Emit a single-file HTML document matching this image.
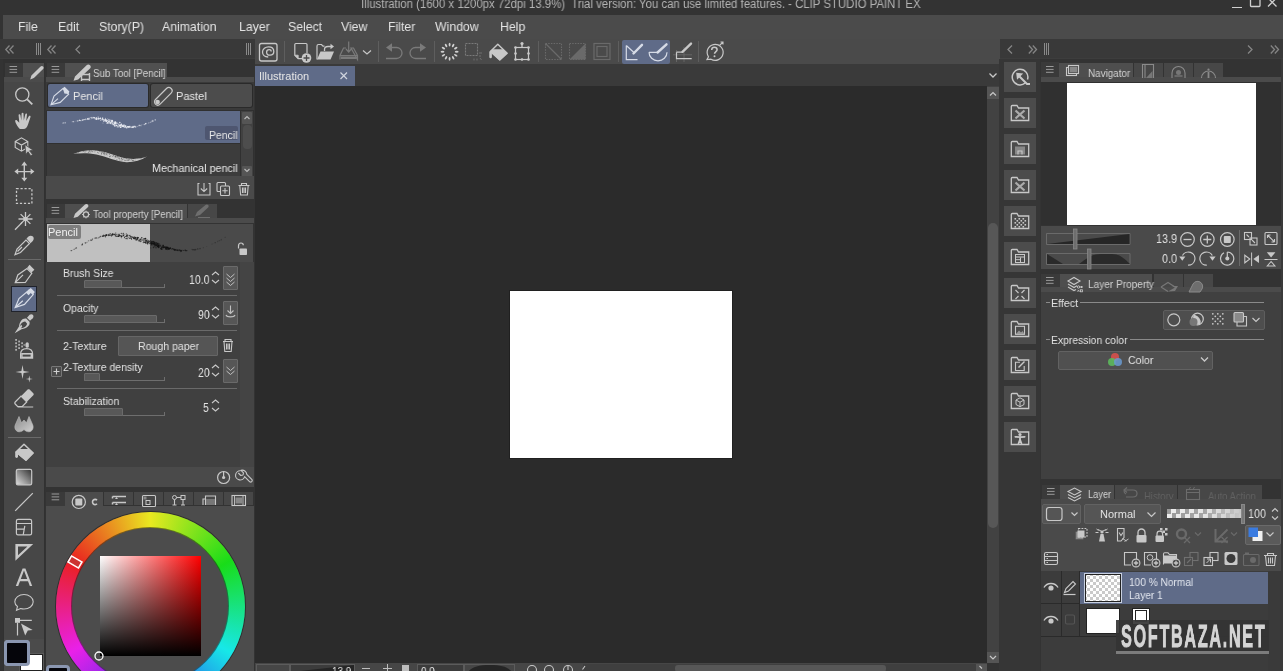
<!DOCTYPE html>
<html><head><meta charset="utf-8">
<style>
*{margin:0;padding:0;box-sizing:border-box}
html,body{width:1283px;height:671px;overflow:hidden;background:#333;font-family:"Liberation Sans",sans-serif;color:#ddd;position:relative}
.a{position:absolute}
.t{position:absolute;white-space:nowrap;line-height:1;will-change:transform}
svg{position:absolute;overflow:visible}
</style></head><body>
<div class="a" style="left:0px;top:0px;width:1283px;height:15px;background:#333333;"></div>
<div class="t" style="left:361px;top:-2px;font-size:12px;color:#b4b4b4;transform:scaleX(0.95);transform-origin:0 0">Illustration (1600 x 1200px 72dpi 13.9%)&nbsp; Trial version: You can use limited features. - CLIP STUDIO PAINT EX</div>
<div class="a" style="left:1232px;top:7px;width:10px;height:1px;background:#d0d0d0;"></div>
<svg style="left:1249px;top:-1px;stroke:#d0d0d0" width="12" height="9" viewBox="0 0 12 9" fill="none" stroke="#c4c4c4" stroke-width="1.3"><rect x="1.5" y="-1" width="9.5" height="8.5" rx="0.8"/></svg>
<svg style="left:1268px;top:-1px;stroke:#d0d0d0" width="12" height="10" viewBox="0 0 12 10" fill="none" stroke="#c4c4c4" stroke-width="1.3"><path d="M0 -1L8.5 7.5M8.5 -1L0 7.5"/></svg>
<div class="a" style="left:3px;top:15px;width:1280px;height:24px;background:#4b4b4b;"></div>
<div class="t" style="left:18px;top:20px;font-size:13px;color:#e4e4e4;transform:scaleX(0.945);transform-origin:0 0">File</div>
<div class="t" style="left:58px;top:20px;font-size:13px;color:#e4e4e4;transform:scaleX(0.945);transform-origin:0 0">Edit</div>
<div class="t" style="left:99px;top:20px;font-size:13px;color:#e4e4e4;transform:scaleX(0.945);transform-origin:0 0">Story(P)</div>
<div class="t" style="left:162px;top:20px;font-size:13px;color:#e4e4e4;transform:scaleX(0.945);transform-origin:0 0">Animation</div>
<div class="t" style="left:239px;top:20px;font-size:13px;color:#e4e4e4;transform:scaleX(0.945);transform-origin:0 0">Layer</div>
<div class="t" style="left:288px;top:20px;font-size:13px;color:#e4e4e4;transform:scaleX(0.945);transform-origin:0 0">Select</div>
<div class="t" style="left:341px;top:20px;font-size:13px;color:#e4e4e4;transform:scaleX(0.945);transform-origin:0 0">View</div>
<div class="t" style="left:388px;top:20px;font-size:13px;color:#e4e4e4;transform:scaleX(0.945);transform-origin:0 0">Filter</div>
<div class="t" style="left:435px;top:20px;font-size:13px;color:#e4e4e4;transform:scaleX(0.945);transform-origin:0 0">Window</div>
<div class="t" style="left:500px;top:20px;font-size:13px;color:#e4e4e4;transform:scaleX(0.945);transform-origin:0 0">Help</div>
<div class="a" style="left:0px;top:39px;width:1283px;height:20px;background:#393939;"></div>
<div class="a" style="left:0px;top:58px;width:1283px;height:1px;background:#3d3d3d;"></div>
<svg style="left:5px;top:45px;stroke:#858585" width="10" height="9" viewBox="0 0 10 9" fill="none" stroke="#c4c4c4" stroke-width="1.3"><path d="M4.5 0.5L0.8 4.5L4.5 8.5M8.5 0.5L4.8 4.5L8.5 8.5"/></svg>
<div class="a" style="left:36px;top:43px;width:1px;height:12px;background:#8a8a8a;"></div>
<div class="a" style="left:38px;top:43px;width:1px;height:12px;background:#8a8a8a;"></div>
<div class="a" style="left:40px;top:43px;width:1px;height:12px;background:#8a8a8a;"></div>
<svg style="left:47px;top:45px;stroke:#858585" width="10" height="9" viewBox="0 0 10 9" fill="none" stroke="#c4c4c4" stroke-width="1.3"><path d="M4.5 0.5L0.8 4.5L4.5 8.5M8.5 0.5L4.8 4.5L8.5 8.5"/></svg>
<svg style="left:75px;top:45px;stroke:#858585" width="6" height="9" viewBox="0 0 6 9" fill="none" stroke="#c4c4c4" stroke-width="1.3"><path d="M5 0.5L1 4.5L5 8.5"/></svg>
<div class="a" style="left:246px;top:43px;width:1px;height:12px;background:#8a8a8a;"></div>
<div class="a" style="left:248px;top:43px;width:1px;height:12px;background:#8a8a8a;"></div>
<div class="a" style="left:250px;top:43px;width:1px;height:12px;background:#8a8a8a;"></div>
<svg style="left:1007px;top:45px;stroke:#858585" width="6" height="9" viewBox="0 0 6 9" fill="none" stroke="#c4c4c4" stroke-width="1.3"><path d="M5 0.5L1 4.5L5 8.5"/></svg>
<svg style="left:1028px;top:45px;stroke:#858585" width="10" height="9" viewBox="0 0 10 9" fill="none" stroke="#c4c4c4" stroke-width="1.3"><path d="M0.8 0.5L4.5 4.5L0.8 8.5M4.8 0.5L8.5 4.5L4.8 8.5"/></svg>
<div class="a" style="left:1044px;top:43px;width:1px;height:12px;background:#8a8a8a;"></div>
<div class="a" style="left:1046px;top:43px;width:1px;height:12px;background:#8a8a8a;"></div>
<div class="a" style="left:1048px;top:43px;width:1px;height:12px;background:#8a8a8a;"></div>
<svg style="left:1247px;top:45px;stroke:#858585" width="6" height="9" viewBox="0 0 6 9" fill="none" stroke="#c4c4c4" stroke-width="1.3"><path d="M1 0.5L5 4.5L1 8.5"/></svg>
<svg style="left:1270px;top:45px;stroke:#858585" width="10" height="9" viewBox="0 0 10 9" fill="none" stroke="#c4c4c4" stroke-width="1.3"><path d="M0.8 0.5L4.5 4.5L0.8 8.5M4.8 0.5L8.5 4.5L4.8 8.5"/></svg>
<div class="a" style="left:0px;top:59px;width:3px;height:612px;background:#333333;"></div>
<div class="a" style="left:3px;top:59px;width:42px;height:612px;background:#313131;"></div>
<div class="a" style="left:5px;top:63px;width:18px;height:14px;background:#3a3a3a;"></div>
<div class="a" style="left:23px;top:63px;width:21px;height:14px;background:#4f4f4f;"></div>
<div class="a" style="left:4px;top:77px;width:40px;height:5px;background:#4b4b4b;"></div>
<div class="a" style="left:4px;top:82px;width:40px;height:557px;background:#474747;"></div>
<div class="a" style="left:4px;top:639px;width:40px;height:32px;background:#4b4b4b;"></div>
<div class="a" style="left:12px;top:287px;width:24px;height:24px;background:#5f6b88;box-shadow:0 0 0 1px #20232c"></div>
<div class="a" style="left:45px;top:59px;width:210px;height:142px;background:#333333;"></div>
<div class="a" style="left:47px;top:63px;width:18px;height:14px;background:#3a3a3a;"></div>
<div class="a" style="left:65px;top:63px;width:102px;height:15px;background:#505050;"></div>
<div class="a" style="left:46px;top:77px;width:208px;height:5px;background:#4b4b4b;"></div>
<div class="t" style="left:93px;top:68px;font-size:10.5px;color:#d2d2d2;transform:scaleX(0.93);transform-origin:0 0">Sub Tool [Pencil]</div>
<div class="a" style="left:46px;top:82px;width:208px;height:28px;background:#3a3a3a;"></div>
<div class="a" style="left:48px;top:84px;width:100px;height:23px;background:#5f6b88;border-radius:2px;box-shadow:0 0 0 1px #2a2a2a"></div>
<div class="a" style="left:151px;top:84px;width:101px;height:23px;background:#4c4c4c;border-radius:2px;box-shadow:0 0 0 1px #2a2a2a"></div>
<div class="t" style="left:73px;top:91px;font-size:11.5px;color:#e8e8e8;transform:scaleX(0.95);transform-origin:0 0">Pencil</div>
<div class="t" style="left:175.5px;top:91px;font-size:11.5px;color:#e8e8e8;transform:scaleX(0.96);transform-origin:0 0">Pastel</div>
<div class="a" style="left:46px;top:110px;width:208px;height:66px;background:#303030;"></div>
<div class="a" style="left:47px;top:111px;width:193px;height:32px;background:#5f6b88;"></div>
<div class="a" style="left:47px;top:144px;width:193px;height:32px;background:#3c3c3c;"></div>
<div class="a" style="left:241px;top:111px;width:12px;height:67px;background:#414141;"></div>
<div class="a" style="left:242px;top:112px;width:10px;height:12px;background:#555555;border-radius:1px"></div>
<div class="a" style="left:243px;top:125px;width:9px;height:24px;background:#4d4d4d;border-radius:4px"></div>
<div class="a" style="left:242px;top:166px;width:10px;height:12px;background:#555555;border-radius:1px"></div>
<div class="a" style="left:205px;top:126px;width:33px;height:14px;background:#4e5670;border-radius:2px"></div>
<div class="t" style="left:209px;top:130px;font-size:11px;color:#e8e8e8;transform:scaleX(0.95);transform-origin:0 0">Pencil</div>
<div class="t" style="left:152px;top:163px;font-size:11px;color:#e8e8e8;transform:scaleX(0.98);transform-origin:0 0">Mechanical pencil</div>
<div class="a" style="left:46px;top:176px;width:208px;height:23px;background:#4a4a4a;"></div>
<div class="a" style="left:45px;top:201px;width:210px;height:3px;background:#333333;"></div>
<div class="a" style="left:45px;top:204px;width:210px;height:20px;background:#333333;"></div>
<div class="a" style="left:47px;top:204px;width:18px;height:14px;background:#3a3a3a;"></div>
<div class="a" style="left:65px;top:204px;width:122px;height:14px;background:#4e4e4e;"></div>
<div class="a" style="left:188px;top:204px;width:29px;height:14px;background:#474747;"></div>
<div class="a" style="left:46px;top:218px;width:208px;height:5px;background:#4b4b4b;"></div>
<div class="t" style="left:93px;top:209px;font-size:10.5px;color:#d2d2d2;transform:scaleX(0.915);transform-origin:0 0">Tool property [Pencil]</div>
<div class="a" style="left:47px;top:224px;width:103px;height:38px;background:#c0c0c0;"></div>
<div class="a" style="left:150px;top:224px;width:103px;height:38px;background:#4a4a4a;"></div>
<div class="a" style="left:48px;top:225px;width:33px;height:14px;background:#7e7e7e;border-radius:2px"></div>
<div class="t" style="left:48px;top:227px;font-size:11px;color:#f0f0f0;">Pencil</div>
<div class="a" style="left:46px;top:262px;width:208px;height:205px;background:#404040;"></div>
<div class="a" style="left:240px;top:262px;width:14px;height:205px;background:#444444;"></div>
<div class="a" style="left:46px;top:467px;width:208px;height:20px;background:#4a4a4a;"></div>
<div class="a" style="left:45px;top:487px;width:210px;height:3px;background:#333333;"></div>
<div class="t" style="left:63px;top:268px;font-size:11px;color:#e2e2e2;transform:scaleX(0.95);transform-origin:0 0">Brush Size</div>
<div class="a" style="left:84px;top:287px;width:81px;height:1px;background:#6e6e6e;"></div>
<div class="a" style="left:164px;top:284px;width:1px;height:4px;background:#6e6e6e;"></div>
<div class="a" style="left:84px;top:280px;width:38px;height:8px;background:#585858;border:1px solid #6a6a6a;border-radius:1px"></div>
<div class="t" style="left:189px;top:273.5px;font-size:12.5px;color:#e2e2e2;transform:scaleX(0.84);transform-origin:0 0">10.0</div>
<div class="a" style="left:223px;top:266px;width:15px;height:24px;background:#565656;border:1px solid #6a6a6a;border-radius:1px"></div>
<div class="a" style="left:57px;top:295px;width:180px;height:1px;background:#6a6a6a;"></div>
<div class="t" style="left:63px;top:303px;font-size:11px;color:#e2e2e2;transform:scaleX(0.95);transform-origin:0 0">Opacity</div>
<div class="a" style="left:84px;top:322px;width:81px;height:1px;background:#6e6e6e;"></div>
<div class="a" style="left:164px;top:319px;width:1px;height:4px;background:#6e6e6e;"></div>
<div class="a" style="left:84px;top:315px;width:73px;height:8px;background:#585858;border:1px solid #6a6a6a;border-radius:1px"></div>
<div class="t" style="left:197.5px;top:308.5px;font-size:12.5px;color:#e2e2e2;transform:scaleX(0.84);transform-origin:0 0">90</div>
<div class="a" style="left:223px;top:301px;width:15px;height:24px;background:#565656;border:1px solid #6a6a6a;border-radius:1px"></div>
<div class="a" style="left:57px;top:330px;width:180px;height:1px;background:#6a6a6a;"></div>
<div class="t" style="left:63px;top:341px;font-size:11px;color:#e2e2e2;transform:scaleX(0.95);transform-origin:0 0">2-Texture</div>
<div class="a" style="left:118px;top:336px;width:100px;height:20px;background:#555555;border:1px solid #666666;border-radius:1px"></div>
<div class="t" style="left:138px;top:341px;font-size:11px;color:#e2e2e2;transform:scaleX(0.96);transform-origin:0 0">Rough paper</div>
<div class="a" style="left:51px;top:366px;width:11px;height:11px;background:#4a4a4a;border:1px solid #777;border-radius:1px"></div>
<div class="t" style="left:63px;top:361.5px;font-size:11px;color:#e2e2e2;transform:scaleX(0.95);transform-origin:0 0">2-Texture density</div>
<div class="a" style="left:84px;top:380px;width:81px;height:1px;background:#6e6e6e;"></div>
<div class="a" style="left:164px;top:377px;width:1px;height:4px;background:#6e6e6e;"></div>
<div class="a" style="left:84px;top:373px;width:16px;height:8px;background:#585858;border:1px solid #6a6a6a;border-radius:1px"></div>
<div class="t" style="left:197.5px;top:366.5px;font-size:12.5px;color:#e2e2e2;transform:scaleX(0.84);transform-origin:0 0">20</div>
<div class="a" style="left:223px;top:359px;width:15px;height:24px;background:#565656;border:1px solid #6a6a6a;border-radius:1px"></div>
<div class="a" style="left:57px;top:388px;width:180px;height:1px;background:#6a6a6a;"></div>
<div class="t" style="left:63px;top:396px;font-size:11px;color:#e2e2e2;transform:scaleX(0.95);transform-origin:0 0">Stabilization</div>
<div class="a" style="left:84px;top:415px;width:81px;height:1px;background:#6e6e6e;"></div>
<div class="a" style="left:164px;top:412px;width:1px;height:4px;background:#6e6e6e;"></div>
<div class="a" style="left:84px;top:408px;width:39px;height:8px;background:#585858;border:1px solid #6a6a6a;border-radius:1px"></div>
<div class="t" style="left:203px;top:401.5px;font-size:12.5px;color:#e2e2e2;transform:scaleX(0.84);transform-origin:0 0">5</div>
<div class="a" style="left:45px;top:490px;width:210px;height:181px;background:#333333;"></div>
<div class="a" style="left:46px;top:492px;width:19px;height:14px;background:#3a3a3a;"></div>
<div class="a" style="left:65px;top:492px;width:38px;height:14px;background:#4c4c4c;"></div>
<div class="a" style="left:104px;top:492px;width:29px;height:13px;background:#474747;"></div>
<div class="a" style="left:134px;top:492px;width:29px;height:13px;background:#474747;"></div>
<div class="a" style="left:164px;top:492px;width:29px;height:13px;background:#474747;"></div>
<div class="a" style="left:194px;top:492px;width:29px;height:13px;background:#474747;"></div>
<div class="a" style="left:224px;top:492px;width:29px;height:13px;background:#474747;"></div>
<div class="a" style="left:46px;top:506px;width:208px;height:165px;background:#4c4c4c;"></div>
<div class="a" style="left:55.5px;top:511.5px;width:189px;height:189px;border-radius:50%;background:conic-gradient(from 0deg,hsl(60,82%,52%),hsl(120,80%,48%) 60deg,hsl(180,82%,50%) 120deg,hsl(240,80%,55%) 180deg,hsl(300,82%,52%) 240deg,hsl(360,82%,52%) 300deg,hsl(420,82%,52%) 360deg);box-shadow:0 0 0 1px rgba(20,20,20,0.5)"></div>
<div class="a" style="left:72px;top:528px;width:156px;height:156px;border-radius:50%;background:#4c4c4c;box-shadow:0 0 0 1px rgba(20,20,20,0.5)"></div>
<div class="a" style="left:100px;top:556px;width:101px;height:100px;background:linear-gradient(to bottom,rgba(0,0,0,0),#000),linear-gradient(to right,#fff,#f00)"></div>
<div class="a" style="left:4px;top:640px;width:26px;height:26px;background:#05050a;border:3px solid #8a96b0;border-radius:4px"></div>
<div class="a" style="left:20px;top:654px;width:23px;height:17px;background:#ffffff;border:1px solid #222;box-shadow:0 0 0 1px #5a5a5a"></div>
<div class="a" style="left:4px;top:640px;width:26px;height:26px;background:#05050a;border:3px solid #8a96b0;border-radius:4px"></div>
<div class="a" style="left:46px;top:665px;width:24px;height:10px;background:#05050a;border:3px solid #8a96b0;border-radius:4px"></div>
<div class="a" style="left:255px;top:39px;width:745px;height:25px;background:#4a4a4a;"></div>
<div class="a" style="left:284px;top:41px;width:1px;height:21px;background:#5e5e5e;"></div>
<div class="a" style="left:378px;top:41px;width:1px;height:21px;background:#5e5e5e;"></div>
<div class="a" style="left:434px;top:41px;width:1px;height:21px;background:#5e5e5e;"></div>
<div class="a" style="left:538px;top:41px;width:1px;height:21px;background:#5e5e5e;"></div>
<div class="a" style="left:618px;top:41px;width:1px;height:21px;background:#5e5e5e;"></div>
<div class="a" style="left:698px;top:41px;width:1px;height:21px;background:#5e5e5e;"></div>
<div class="a" style="left:255px;top:64px;width:744px;height:22px;background:#3a3a3a;"></div>
<div class="a" style="left:622px;top:40px;width:48px;height:24px;background:#5f6b88;border-radius:2px"></div>
<div class="a" style="left:255px;top:66px;width:100px;height:20px;background:#5f6b88;"></div>
<div class="t" style="left:259px;top:71px;font-size:11px;color:#e6e6e6;">Illustration</div>
<div class="a" style="left:255px;top:86px;width:732px;height:577px;background:#2b2b2b;"></div>
<div class="a" style="left:510px;top:291px;width:222px;height:167px;background:#ffffff;box-shadow:0 0 0 1px #202020"></div>
<div class="a" style="left:987px;top:86px;width:12px;height:577px;background:#424242;"></div>
<div class="a" style="left:987px;top:87px;width:12px;height:12px;background:#555555;"></div>
<div class="a" style="left:988px;top:223px;width:10px;height:305px;background:#575757;border-radius:5px"></div>
<div class="a" style="left:987px;top:652px;width:12px;height:11px;background:#555555;"></div>
<div class="a" style="left:255px;top:663px;width:732px;height:8px;background:#464646;"></div>
<div class="a" style="left:256px;top:664px;width:34px;height:8px;background:#464646;border:1px solid #5c5c5c"></div>
<div class="a" style="left:290px;top:664px;width:65px;height:8px;background:#3c3c3c;border:1px solid #5c5c5c"></div>
<svg style="left:290px;top:664px" width="65" height="8"><path d="M1 8L64 1V8Z" fill="#252525"/></svg>
<div class="t" style="left:332px;top:666px;font-size:11.5px;color:#e8e8e8;transform:scaleX(0.86);transform-origin:0 0">13.9</div>
<div class="a" style="left:362px;top:668px;width:8px;height:1.3px;background:#bdbdbd;"></div>
<div class="a" style="left:383px;top:668px;width:9px;height:1.3px;background:#bdbdbd;"></div>
<div class="a" style="left:386.8px;top:664px;width:1.3px;height:8px;background:#bdbdbd;"></div>
<div class="a" style="left:402px;top:665px;width:7px;height:7px;background:#bdbdbd;"></div>
<div class="a" style="left:417px;top:664px;width:47px;height:8px;background:#3c3c3c;border:1px solid #5c5c5c"></div>
<div class="t" style="left:421px;top:666px;font-size:11.5px;color:#e8e8e8;transform:scaleX(0.86);transform-origin:0 0">0.0</div>
<div class="a" style="left:464px;top:664px;width:51px;height:8px;background:#464646;border:1px solid #5c5c5c"></div>
<svg style="left:464px;top:664px" width="51" height="8"><path d="M4 8C8 3 14 1 26 1C38 1 44 3 48 8Z" fill="#252525"/></svg>
<div class="a" style="left:583px;top:664px;width:404px;height:8px;background:#3f3f3f;"></div>
<div class="a" style="left:675px;top:665px;width:211px;height:7px;background:#575757;border-radius:3px"></div>
<div class="a" style="left:976px;top:664px;width:11px;height:8px;background:#555555;"></div>
<div class="a" style="left:999px;top:59px;width:41px;height:612px;background:#363636;"></div>
<div class="a" style="left:1004px;top:62px;width:32px;height:30px;background:#4c4c4c;"></div>
<div class="a" style="left:1004px;top:98px;width:32px;height:30px;background:#4c4c4c;"></div>
<div class="a" style="left:1004px;top:134px;width:32px;height:30px;background:#4c4c4c;"></div>
<div class="a" style="left:1004px;top:170px;width:32px;height:30px;background:#4c4c4c;"></div>
<div class="a" style="left:1004px;top:206px;width:32px;height:30px;background:#4c4c4c;"></div>
<div class="a" style="left:1004px;top:242px;width:32px;height:30px;background:#4c4c4c;"></div>
<div class="a" style="left:1004px;top:278px;width:32px;height:30px;background:#4c4c4c;"></div>
<div class="a" style="left:1004px;top:314px;width:32px;height:30px;background:#4c4c4c;"></div>
<div class="a" style="left:1004px;top:350px;width:32px;height:30px;background:#4c4c4c;"></div>
<div class="a" style="left:1004px;top:386px;width:32px;height:30px;background:#4c4c4c;"></div>
<div class="a" style="left:1004px;top:422px;width:32px;height:30px;background:#4c4c4c;"></div>
<div class="a" style="left:1040px;top:59px;width:243px;height:612px;background:#333333;"></div>
<div class="a" style="left:1281px;top:59px;width:2px;height:612px;background:#3a3a3a;"></div>
<div class="a" style="left:1041px;top:62px;width:18px;height:15px;background:#3a3a3a;"></div>
<div class="a" style="left:1059px;top:63px;width:74px;height:14px;background:#4e4e4e;"></div>
<div class="a" style="left:1134px;top:63px;width:29px;height:14px;background:#474747;"></div>
<div class="a" style="left:1164px;top:63px;width:29px;height:14px;background:#474747;"></div>
<div class="a" style="left:1194px;top:63px;width:29px;height:14px;background:#474747;"></div>
<div class="a" style="left:1041px;top:77px;width:240px;height:5px;background:#4b4b4b;"></div>
<div class="a" style="left:1041px;top:82px;width:240px;height:143px;background:#303030;"></div>
<div class="a" style="left:1067px;top:83px;width:189px;height:142px;background:#ffffff;"></div>
<div class="a" style="left:1041px;top:226px;width:240px;height:43px;background:#4a4a4a;"></div>
<div class="t" style="left:1088px;top:68px;font-size:10.5px;color:#d2d2d2;transform:scaleX(0.94);transform-origin:0 0">Navigator</div>
<div class="t" style="left:1156px;top:233px;font-size:12.5px;color:#e0e0e0;transform:scaleX(0.86);transform-origin:0 0">13.9</div>
<div class="t" style="left:1161.5px;top:252.5px;font-size:12.5px;color:#e0e0e0;transform:scaleX(0.86);transform-origin:0 0">0.0</div>
<div class="a" style="left:1239px;top:230px;width:1px;height:36px;background:#6a6a6a;"></div>
<div class="a" style="left:1041px;top:274px;width:19px;height:14px;background:#3a3a3a;"></div>
<div class="a" style="left:1060px;top:274px;width:92px;height:14px;background:#4e4e4e;"></div>
<div class="a" style="left:1154px;top:274px;width:29px;height:14px;background:#474747;"></div>
<div class="a" style="left:1184px;top:274px;width:29px;height:14px;background:#474747;"></div>
<div class="a" style="left:1041px;top:287px;width:240px;height:5px;background:#4b4b4b;"></div>
<div class="a" style="left:1041px;top:292px;width:240px;height:187px;background:#404040;"></div>
<div class="t" style="left:1088px;top:279px;font-size:10.5px;color:#d2d2d2;transform:scaleX(0.96);transform-origin:0 0">Layer Property</div>
<div class="t" style="left:1051px;top:297.5px;font-size:11.5px;color:#e2e2e2;transform:scaleX(0.93);transform-origin:0 0">Effect</div>
<div class="t" style="left:1051px;top:335px;font-size:11.5px;color:#e2e2e2;transform:scaleX(0.9);transform-origin:0 0">Expression color</div>
<div class="a" style="left:1163px;top:310px;width:102px;height:20px;background:#4e4e4e;border:1px solid #5e5e5e;border-radius:2px"></div>
<div class="a" style="left:1058px;top:351px;width:155px;height:19px;background:#505050;border:1px solid #626262;border-radius:2px"></div>
<div class="t" style="left:1127.5px;top:354.5px;font-size:11.5px;color:#e2e2e2;transform:scaleX(0.92);transform-origin:0 0">Color</div>
<div class="a" style="left:1111px;top:353px;width:8px;height:8px;border-radius:50%;background:#c9504c"></div>
<div class="a" style="left:1108px;top:357.5px;width:8px;height:8px;border-radius:50%;background:#5cb85c;opacity:0.9"></div>
<div class="a" style="left:1114px;top:357.5px;width:8px;height:8px;border-radius:50%;background:#6a9ad0;opacity:0.85"></div>
<div class="a" style="left:1042px;top:485px;width:18px;height:14px;background:#3a3a3a;"></div>
<div class="a" style="left:1060px;top:485px;width:54px;height:14px;background:#4e4e4e;"></div>
<div class="a" style="left:1115px;top:485px;width:62px;height:14px;background:#474747;"></div>
<div class="a" style="left:1178px;top:485px;width:84px;height:14px;background:#474747;"></div>
<div class="a" style="left:1041px;top:499px;width:240px;height:72px;background:#4a4a4a;"></div>
<div class="t" style="left:1088px;top:489px;font-size:10.5px;color:#d2d2d2;transform:scaleX(0.88);transform-origin:0 0">Layer</div>
<div class="a" style="left:1115px;top:485px;width:147px;height:13.5px;overflow:hidden"><div class="t" style="left:29px;top:6px;font-size:10.5px;color:#626262;transform:scaleX(0.9);transform-origin:0 0">History</div><div class="t" style="left:92.5px;top:6px;font-size:10.5px;color:#626262;transform:scaleX(0.9);transform-origin:0 0">Auto Action</div></div>
<div class="a" style="left:1042px;top:504px;width:39px;height:20px;background:#555555;border:1px solid #626262;border-radius:2px"></div>
<div class="a" style="left:1084px;top:504px;width:77px;height:20px;background:#555555;border:1px solid #626262;border-radius:2px"></div>
<div class="t" style="left:1100px;top:509px;font-size:11px;color:#e2e2e2;">Normal</div>
<div class="a" style="left:1167px;top:509px;width:75px;height:9px;background:linear-gradient(to right,rgba(200,200,200,0) 0%,rgba(200,200,200,0.25) 50%,rgba(200,200,200,1) 100%),conic-gradient(#eeeeee 25%,#9a9a9a 0 50%,#eeeeee 0 75%,#9a9a9a 0);background-size:100% 100%,9px 9px;background-position:0 0,0 0"></div>
<div class="a" style="left:1241px;top:504px;width:4px;height:20px;background:#777777;border:1px solid #888"></div>
<div class="t" style="left:1248px;top:507.5px;font-size:12.5px;color:#e2e2e2;transform:scaleX(0.86);transform-origin:0 0">100</div>
<div class="a" style="left:1245px;top:525px;width:36px;height:20px;background:#5a5a5a;border:1px solid #6a6a6a;border-radius:2px"></div>
<div class="a" style="left:1041px;top:571px;width:240px;height:100px;background:#3c3c3c;"></div>
<div class="a" style="left:1061px;top:571px;width:1px;height:66px;background:#2a2a2a;"></div>
<div class="a" style="left:1079px;top:571px;width:1px;height:66px;background:#2a2a2a;"></div>
<div class="a" style="left:1041px;top:603px;width:227px;height:1px;background:#2a2a2a;"></div>
<div class="a" style="left:1041px;top:636px;width:227px;height:1px;background:#2a2a2a;"></div>
<div class="a" style="left:1268px;top:571px;width:13px;height:100px;background:#3a3a3a;"></div>
<div class="a" style="left:1080px;top:572px;width:188px;height:32px;background:#5f6b88;"></div>
<div class="a" style="left:1084px;top:573px;width:38px;height:30px;border:1px solid #c8d0e0;box-shadow:inset 0 0 0 1px #222;background:conic-gradient(#ffffff 25%,#cacaca 0 50%,#ffffff 0 75%,#cacaca 0);background-size:6px 6px;background-position:2px 2px"></div>
<div class="t" style="left:1129px;top:577px;font-size:11px;color:#e2e6ee;transform:scaleX(0.92);transform-origin:0 0">100 % Normal</div>
<div class="t" style="left:1129px;top:589.5px;font-size:11px;color:#e2e6ee;transform:scaleX(0.92);transform-origin:0 0">Layer 1</div>
<div class="a" style="left:1086px;top:608px;width:34px;height:26px;background:#ffffff;border:1px solid #222"></div>
<div class="a" style="left:1132px;top:608px;width:18px;height:17px;background:#ffffff;border:1px solid #222"></div>
<div class="a" style="left:1046px;top:302px;width:4px;height:1px;background:#8a8a8a;"></div>
<div class="a" style="left:1080px;top:302px;width:184px;height:1px;background:#8a8a8a;"></div>
<div class="a" style="left:1046px;top:339px;width:4px;height:1px;background:#8a8a8a;"></div>
<div class="a" style="left:1130px;top:339px;width:134px;height:1px;background:#8a8a8a;"></div>
<div class="a" style="left:8px;top:259px;width:33px;height:1px;background:#6a6a6a;"></div>
<div class="a" style="left:8px;top:437px;width:33px;height:1px;background:#6a6a6a;"></div>
<div class="a" style="left:1116px;top:620px;width:153px;height:34px;background:rgba(52,52,52,0.92);z-index:6"></div>
<div class="a" style="left:1116px;top:651px;width:153px;height:3px;background:#7c7c7c;z-index:6"></div>
<div class="t" id="wm" style="left:1121px;top:621px;font-size:30.5px;font-weight:bold;color:#d4d4d4;z-index:7;transform:scaleX(0.535);transform-origin:0 0;letter-spacing:3px;-webkit-text-stroke:0.9px #d4d4d4">SOFTBAZA.NET</div>
<svg style="left:0;top:0;z-index:5" width="1283" height="671" viewBox="0 0 1283 671" fill="none" stroke="#c8c8c8" stroke-width="1.3"><path d="M212 275L215.5 272L219 275M212 280L215.5 283L219 280" stroke="#c8c8c8" stroke-width="1.1"/><path d="M212 310L215.5 307L219 310M212 315L215.5 318L219 315" stroke="#c8c8c8" stroke-width="1.1"/><path d="M212 368L215.5 365L219 368M212 373L215.5 376L219 373" stroke="#c8c8c8" stroke-width="1.1"/><path d="M212 403L215.5 400L219 403M212 408L215.5 411L219 408" stroke="#c8c8c8" stroke-width="1.1"/><path d="M53.5 371.5H59.5M56.5 368.5V374.5" stroke="#d0d0d0" stroke-width="1.1"/><path d="M226.5 274L230.5 277.5L234.5 274M226.5 278L230.5 281.5L234.5 278M226.5 282L230.5 285.5L234.5 282" stroke="#c0c0c0" stroke-width="1"/><path d="M230.5 305.5V313M227.5 310.5L230.5 313.5L233.5 310.5M226 315C227 317.5 234 317.5 235 315" stroke="#c0c0c0" stroke-width="1.1"/><path d="M226.5 367L230.5 370.5L234.5 367M226.5 371L230.5 374.5L234.5 371" stroke="#c0c0c0" stroke-width="1"/><path d="M223 341.5H233M225 341.5V339.5H231V341.5M224 341.5L224.8 351.5H231.2L232 341.5M226.5 343.5V349.5M228 343.5V349.5M229.5 343.5V349.5" stroke-width="1.1"/><circle cx="223.6" cy="477.5" r="6" stroke-width="1.2"/><path d="M223.6 471.5V477.5" stroke-width="1.2"/><circle cx="223.6" cy="477.5" r="1.6" fill="#c8c8c8" stroke="none"/><path d="M240.5 470.8A4.6 4.6 0 1 0 244.6 476.6L249.8 481.8A1.6 1.6 0 0 0 252 479.6L246.8 474.4A4.6 4.6 0 0 0 241 470.3L243.5 472.8L243 475L240.8 475.5L238.3 473" stroke-width="1.1" stroke-linejoin="round"/><rect x="259.5" y="43.5" width="17.5" height="17.5" rx="2" stroke-width="1.3"/><path d="M268.2 57C264.5 57 262.5 54.6 262.5 52C262.5 48.8 265.5 46.8 268.5 46.8C271.5 46.8 273.8 48.6 273.8 51.5C273.8 53.8 272 55.2 270 55.2C268 55.2 266.6 54 266.6 52.2C266.6 50.6 267.8 49.6 269.2 49.6C270.4 49.6 271.2 50.4 271.2 51.4" stroke-width="1.3"/><path d="M302.5 58.6H298.2L294.8 55.2V44.5C294.8 43.9 295.2 43.5 295.8 43.5H306C306.6 43.5 307 43.9 307 44.5V53" stroke-width="1.2"/><path d="M295 55.2H298.2V58.4Z" fill="#c8c8c8" stroke="#c8c8c8" stroke-width="0.8"/><circle cx="306.5" cy="58" r="4.8" fill="#c8c8c8" stroke="none"/><path d="M306.5 55V61M303.5 58H309.5" stroke="#4a4a4a" stroke-width="1.3"/><path d="M317 59.5V46C317 45 317.6 44.5 318.5 44.5H321.5L323 46.2H324.5" stroke-width="1.2"/><path d="M317 59.5L320.5 51.5H334L330.5 59.5Z" fill="#c8c8c8" stroke="none"/><path d="M324.5 51V49.5C324.5 47.5 326 46.5 328 46.5H331.5" stroke-width="1.3"/><path d="M330.5 43.8L334 46.5L330.5 49.2Z" fill="#c8c8c8" stroke="none"/><path d="M340 59.5V55.5L343.5 48H346M351 48H353.5L357.5 55.5V59.5Z M340 55.5H357.5" stroke="#7a7a7a" stroke-width="1.2"/><path d="M348.7 41.5V51.5M346 49L348.7 52L351.4 49" stroke="#7a7a7a" stroke-width="1.2"/><rect x="341" y="56.5" width="15.5" height="2.5" fill="#7a7a7a" stroke="none"/><path d="M363 50.5L367 54L371 50.5" stroke-width="1.2"/><path d="M390.5 47.5H396.5A5.5 5.5 0 0 1 396.5 58.5H386" stroke="#7a7a7a" stroke-width="1.3"/><path d="M386 47.5L392 43.2V51.8Z" fill="#7a7a7a" stroke="none"/><path d="M421.5 47.5H415.5A5.5 5.5 0 0 0 415.5 58.5H426" stroke="#7a7a7a" stroke-width="1.3"/><path d="M426 47.5L420 43.2V51.8Z" fill="#7a7a7a" stroke="none"/><g fill="#d0d0d0" stroke="none"><ellipse cx="449.60" cy="44.60" rx="0.95" ry="1.9" transform="rotate(0 449.60 44.60)"/><ellipse cx="453.15" cy="45.55" rx="0.95" ry="1.9" transform="rotate(30 453.15 45.55)"/><ellipse cx="455.75" cy="48.15" rx="0.95" ry="1.9" transform="rotate(60 455.75 48.15)"/><ellipse cx="456.70" cy="51.70" rx="0.95" ry="1.9" transform="rotate(90 456.70 51.70)"/><ellipse cx="455.75" cy="55.25" rx="0.95" ry="1.9" transform="rotate(120 455.75 55.25)"/><ellipse cx="453.15" cy="57.85" rx="0.95" ry="1.9" transform="rotate(150 453.15 57.85)"/><ellipse cx="449.60" cy="58.80" rx="0.95" ry="1.9" transform="rotate(180 449.60 58.80)"/><ellipse cx="446.05" cy="57.85" rx="0.95" ry="1.9" transform="rotate(210 446.05 57.85)"/><ellipse cx="443.45" cy="55.25" rx="0.95" ry="1.9" transform="rotate(240 443.45 55.25)"/><ellipse cx="442.50" cy="51.70" rx="0.95" ry="1.9" transform="rotate(270 442.50 51.70)"/><ellipse cx="443.45" cy="48.15" rx="0.95" ry="1.9" transform="rotate(300 443.45 48.15)"/><ellipse cx="446.05" cy="45.55" rx="0.95" ry="1.9" transform="rotate(330 446.05 45.55)"/></g><rect x="465.5" y="43.5" width="12" height="12" stroke="#7a7a7a" stroke-width="1.1" stroke-dasharray="2 1"/><path d="M479 53H482M479 56H481M474 58.5V60.5M477 58.5V60.5M480 58L481.5 60" stroke="#6e6e6e" stroke-width="1"/><path d="M497.8 44.2L507.2 53.3L499.8 60L490.4 51.5Z" stroke-width="1.4" stroke-linejoin="round"/><path d="M492.3 49.2H503.4L507.5 53.3L499.8 60.5L489.6 51.6Z" fill="#c8c8c8" stroke="none"/><path d="M490.6 52.5V57" stroke-width="2.6" stroke-linecap="round"/><rect x="515.5" y="47.5" width="13" height="12" stroke-width="1.2"/><path d="M522 47.5V44" stroke-width="1.4"/><circle cx="522" cy="43.5" r="1.6" fill="#c8c8c8" stroke="none"/><g fill="#c8c8c8" stroke="none"><circle cx="515.5" cy="47.5" r="1.3"/><circle cx="528.5" cy="47.5" r="1.3"/><circle cx="515.5" cy="59.5" r="1.3"/><circle cx="528.5" cy="59.5" r="1.3"/><circle cx="515.5" cy="53.5" r="1.3"/><circle cx="528.5" cy="53.5" r="1.3"/><circle cx="522" cy="59.5" r="1.3"/></g><rect x="545.5" y="43.5" width="16" height="16" stroke="#6a6a6a" stroke-width="1.1" stroke-dasharray="1.5 1.2"/><path d="M545.5 43.5L561.5 59.5" stroke="#6a6a6a" stroke-width="1.2"/><rect x="569.5" y="43.5" width="16" height="16" stroke="#6a6a6a" stroke-width="1.1" stroke-dasharray="1.5 1.2"/><path d="M569.5 59.5H585.5V43.5Z" fill="#6a6a6a" stroke="none"/><rect x="594" y="43.5" width="16" height="16" stroke="#6a6a6a" stroke-width="1.2"/><rect x="597" y="46.5" width="10" height="10" stroke="#6a6a6a" stroke-width="1.2"/><path d="M626.3 45.5V59.6H637.5M626.3 45.5L634.2 52.8" stroke="#d6dbe6" stroke-width="1.2"/><path d="M633.5 53.5L642 44.8" stroke="#d6dbe6" stroke-width="2.4" stroke-linecap="round"/><path d="M649 52.3H658M649 52.3A9 8.5 0 0 0 667 52.3" stroke="#d6dbe6" stroke-width="1.2"/><path d="M657.5 52.5L666.5 44.3" stroke="#d6dbe6" stroke-width="2.4" stroke-linecap="round"/><path d="M673 54.8H692M684 47V62M676.5 50V62" stroke="#777" stroke-width="0.6"/><path d="M676.5 52.2V58.6H691.7M676.5 52.2H682.5" stroke-width="1.2"/><path d="M682.5 51.8L691 43.6" stroke-width="2.4" stroke-linecap="round"/><path d="M707 59.5L708.5 56.8A8 8 0 1 1 711 59.2Z" stroke-width="1.2"/><path d="M711.7 50C711.7 48.2 712.9 47.3 714.4 47.3C716 47.3 717.1 48.3 717.1 49.7C717.1 51.4 714.5 51.8 714.5 53.8" stroke-width="1.5"/><circle cx="714.5" cy="56.2" r="1" fill="#c8c8c8" stroke="none"/><path d="M719.5 45.5L723 42M720.5 42H723V44.5" stroke-width="1.1"/><path d="M340.5 72.5L347 79M347 72.5L340.5 79" stroke="#d0d4de" stroke-width="1.2"/><path d="M989.5 73.5L993 77L996.5 73.5" stroke="#c8c8c8" stroke-width="1.3"/><path d="M990 95.5L993 92.5L996 95.5" stroke="#c8c8c8" stroke-width="1.2"/><path d="M990 656L993 659L996 656" stroke="#c8c8c8" stroke-width="1.2"/><path d="M1025.2 83A7.8 7.8 0 1 1 1027.5 79.5" stroke-width="1.5"/><path d="M1019.5 76.5L1027 84H1030" stroke-width="2"/><path d="M1016.2 72.8L1023.2 73.6L1017 79.8Z" fill="#c8c8c8" stroke="none"/><path d="M1011.3 108.0V120.5H1028.7V108.0H1018.5L1017 105.5H1012.3C1011.7 105.5 1011.3 105.9 1011.3 106.5V108.0" stroke-width="1.3"/><path d="M1015.5 110.5L1024.5 118.5M1024.5 110.5L1015.5 118.5" stroke-width="2.2" stroke="#aaa"/><path d="M1011.3 180.0V192.5H1028.7V180.0H1018.5L1017 177.5H1012.3C1011.7 177.5 1011.3 177.9 1011.3 178.5V180.0" stroke-width="1.3"/><path d="M1015.5 182.5L1024.5 190.5M1024.5 182.5L1015.5 190.5" stroke-width="2.2" stroke="#aaa"/><path d="M1011.3 144.0V156.5H1028.7V144.0H1018.5L1017 141.5H1012.3C1011.7 141.5 1011.3 141.9 1011.3 142.5V144.0" stroke-width="1.3"/><rect x="1015" y="146.5" width="10" height="8" fill="#888" stroke="none"/><path d="M1018 154.5V151.0H1022V154.5" stroke-width="1.1"/><path d="M1011.3 216.0V228.5H1028.7V216.0H1018.5L1017 213.5H1012.3C1011.7 213.5 1011.3 213.9 1011.3 214.5V216.0" stroke-width="1.3"/><g fill="#c8c8c8" stroke="none"><rect x="1014.5" y="218.0" width="1.6" height="1.6"/><rect x="1014.5" y="222.0" width="1.6" height="1.6"/><rect x="1014.5" y="226.0" width="1.6" height="1.6"/><rect x="1016.5" y="220.0" width="1.6" height="1.6"/><rect x="1016.5" y="224.0" width="1.6" height="1.6"/><rect x="1018.5" y="218.0" width="1.6" height="1.6"/><rect x="1018.5" y="222.0" width="1.6" height="1.6"/><rect x="1018.5" y="226.0" width="1.6" height="1.6"/><rect x="1020.5" y="220.0" width="1.6" height="1.6"/><rect x="1020.5" y="224.0" width="1.6" height="1.6"/><rect x="1022.5" y="218.0" width="1.6" height="1.6"/><rect x="1022.5" y="222.0" width="1.6" height="1.6"/><rect x="1022.5" y="226.0" width="1.6" height="1.6"/><rect x="1024.5" y="220.0" width="1.6" height="1.6"/><rect x="1024.5" y="224.0" width="1.6" height="1.6"/></g><path d="M1011.3 252.0V264.5H1028.7V252.0H1018.5L1017 249.5H1012.3C1011.7 249.5 1011.3 249.9 1011.3 250.5V252.0" stroke-width="1.3"/><rect x="1015.5" y="254.5" width="9" height="8" stroke-width="1"/><path d="M1015.5 257.0H1024.5M1015.5 259.7H1020M1020.5 257.5V262.5" stroke-width="1"/><path d="M1011.3 288.0V300.5H1028.7V288.0H1018.5L1017 285.5H1012.3C1011.7 285.5 1011.3 285.9 1011.3 286.5V288.0" stroke-width="1.3"/><path d="M1015.5 290.0L1018.5 293.0M1024.5 290.0L1021.5 293.0M1015.5 299.0L1018.5 296.0M1024.5 299.0L1021.5 296.0" stroke-width="1.2"/><path d="M1011.3 324.0V336.5H1028.7V324.0H1018.5L1017 321.5H1012.3C1011.7 321.5 1011.3 321.9 1011.3 322.5V324.0" stroke-width="1.3"/><rect x="1015.5" y="326.3" width="9" height="8" stroke-width="1.1"/><path d="M1016 334.0L1019 330.5L1021 332.5L1022.5 331.0L1024.5 334.0Z" fill="#999" stroke="none"/><path d="M1011.3 360.0V372.5H1028.7V360.0H1018.5L1017 357.5H1012.3C1011.7 357.5 1011.3 357.9 1011.3 358.5V360.0" stroke-width="1.3"/><path d="M1020 362.3H1015.5V370.5H1024.2V366.0" stroke-width="1.1"/><path d="M1018.5 367.5L1024.5 361.5" stroke-width="1.4"/><path d="M1011.3 396.0V408.5H1028.7V396.0H1018.5L1017 393.5H1012.3C1011.7 393.5 1011.3 393.9 1011.3 394.5V396.0" stroke-width="1.3"/><path d="M1016 400.0L1020 397.8L1024 400.0V404.5L1020 406.7L1016 404.5Z M1016 400.0L1020 402.2L1024 400.0M1020 402.2V406.5" stroke-width="1"/><path d="M1011.3 432.0V444.5H1028.7V432.0H1018.5L1017 429.5H1012.3C1011.7 429.5 1011.3 429.9 1011.3 430.5V432.0" stroke-width="1.3"/><circle cx="1020" cy="434.5" r="1.6" fill="#c8c8c8" stroke="none"/><path d="M1015.3 436.8L1020 437.1L1024.7 436.8M1020 437.0V440.0M1018.6 443.3L1020 439.5L1021.4 443.3" stroke-width="1.8" stroke-linecap="round"/><rect x="1066.5" y="67.5" width="10" height="8" stroke-width="1.1"/><rect x="1068.5" y="65.5" width="10" height="8" fill="#4e4e4e" stroke-width="1.1"/><rect x="1069.8" y="66.8" width="7.4" height="5.4" fill="#888" stroke="none"/><path d="M1142.5 78V64.5H1153.5V78M1145 65V78" stroke="#8a8a8a" stroke-width="1.1"/><path d="M1146 78L1152.5 71V78Z" fill="#777" stroke="none"/><path d="M1172 78V73A6.5 6.5 0 0 1 1185 73V78M1174.5 76H1182.5" stroke="#8a8a8a" stroke-width="1.1"/><circle cx="1178.5" cy="72.5" r="2.5" fill="#777" stroke="none"/><path d="M1201.5 78A7 7 0 1 1 1215.5 78" stroke="#8a8a8a" stroke-width="1.1"/><rect x="1207.6" y="72" width="1.8" height="6" fill="#8a8a8a" stroke="none"/><circle cx="1208.5" cy="69.5" r="1.1" fill="#8a8a8a" stroke="none"/><path d="M1046.5 233.5H1130V244.5H1046.5Z" stroke="#6a6a6a" stroke-width="1"/><path d="M1047 244L1129.5 234V244Z" fill="#262626" stroke="none"/><path d="M1046.5 253.5H1130V264.5H1046.5Z" stroke="#6a6a6a" stroke-width="1"/><path d="M1047 254L1063 264H1047Z M1079 264C1086 259 1091 254 1101 254H1112C1120 254 1125 259 1130 264Z" fill="#2a2a2a" stroke="none"/><rect x="1073.5" y="229" width="3.5" height="20" fill="#6e6e6e" stroke="#888" stroke-width="0.8"/><rect x="1087.5" y="249" width="3.5" height="20" fill="#6e6e6e" stroke="#888" stroke-width="0.8"/><circle cx="1187.5" cy="239.5" r="6.8" stroke-width="1.2"/><path d="M1183.5 239.5H1191.5" stroke-width="1.3"/><circle cx="1207.3" cy="239.5" r="6.8" stroke-width="1.2"/><path d="M1203.3 239.5H1211.3M1207.3 235.5V243.5" stroke-width="1.3"/><circle cx="1227.3" cy="239.5" r="6.8" stroke-width="1.2"/><rect x="1223.8" y="236" width="7" height="7" rx="1" fill="#c8c8c8" stroke="none"/><rect x="1244.5" y="232.5" width="7" height="7" stroke-width="1.1"/><rect x="1250" y="238" width="7" height="7" stroke-width="1.1"/><path d="M1246.5 234.5L1249 237M1252 240L1255 243" stroke-width="1.1"/><rect x="1265" y="232.5" width="12" height="12" rx="1" stroke-width="1.1"/><path d="M1267.5 235L1274.5 242M1267.5 235H1270.5M1267.5 235V238M1274.5 242H1271.5M1274.5 242V239" stroke-width="1.1"/><path d="M1182.5 255.5A6.6 6.6 0 1 1 1188 265.2" stroke-width="1.2"/><path d="M1179.2 256.5H1185.4L1182.3 260.8Z" fill="#c8c8c8" stroke="none"/><path d="M1212.3 255.5A6.6 6.6 0 1 0 1206.8 265.2" stroke-width="1.2"/><path d="M1215.6 256.5H1209.4L1212.5 260.8Z" fill="#c8c8c8" stroke="none"/><path d="M1224 252.8A6.6 6.6 0 1 0 1227.3 252" stroke-width="1.2"/><path d="M1227.3 252V258.5" stroke-width="1.2"/><circle cx="1227.3" cy="258.5" r="2" fill="#c8c8c8" stroke="none"/><path d="M1244.8 255.2L1249.8 259L1244.8 262.8Z" stroke-width="1.1"/><path d="M1259 255L1253.3 259L1259 263Z" fill="#c8c8c8" stroke="none"/><path d="M1251.6 252.5V266" stroke-width="1"/><path d="M1266.8 252.2H1275.4L1271.1 257.6Z" fill="#c8c8c8" stroke="none"/><path d="M1264.5 259.5H1277.5" stroke-width="1"/><path d="M1267.3 266H1274.9L1271.1 261.5Z" stroke-width="1.1"/><path d="M1068 281L1074 277.5L1080 281L1074 284.5Z" stroke-width="1.1"/><path d="M1068 284L1074 287.5L1077 285.8M1068 287L1074 290.5L1076 289.4" stroke-width="1.1"/><circle cx="1078.5" cy="287" r="1.2" stroke-width="0.9"/><rect x="1080.5" y="286" width="2" height="2" fill="#c8c8c8" stroke="none"/><path d="M1077.5 289.8L1079.5 291.8M1079.5 289.8L1077.5 291.8" stroke-width="0.8"/><rect x="1080.5" y="289.8" width="2" height="2" stroke-width="0.8"/><path d="M1161 287L1168 282.5L1175 287M1161 287L1168 291.5" stroke="#777" stroke-width="1.2"/><path d="M1168 291.5L1175 287.5L1172 286H1178L1175 291Z" fill="#777" stroke="none"/><path d="M1189 292L1193 284A5 5 0 1 1 1202 289L1200 292Z" fill="#6e6e6e" stroke="#8a8a8a" stroke-width="1"/><circle cx="1173.8" cy="319.8" r="6" stroke-width="1.2"/><circle cx="1197.5" cy="319" r="5.8" stroke-width="1.2"/><path d="M1193.5 315C1196 314.5 1199.5 317 1200.5 320.5C1201 322 1200.5 323.5 1200 324.5C1197 324.8 1194.5 323 1193.5 320.5C1193 318.5 1193 316.5 1193.5 315Z" fill="#c8c8c8" stroke="none"/><circle cx="1193.5" cy="322" r="4" fill="#777" stroke="none"/><g fill="#c8c8c8" stroke="none"><circle cx="1212.8" cy="313.8" r="0.9"/><circle cx="1212.8" cy="318.8" r="0.9"/><circle cx="1212.8" cy="323.8" r="0.9"/><circle cx="1215.3" cy="316.3" r="0.9"/><circle cx="1215.3" cy="321.3" r="0.9"/><circle cx="1217.8" cy="313.8" r="0.9"/><circle cx="1217.8" cy="318.8" r="0.9"/><circle cx="1217.8" cy="323.8" r="0.9"/><circle cx="1220.3" cy="316.3" r="0.9"/><circle cx="1220.3" cy="321.3" r="0.9"/><circle cx="1222.8" cy="313.8" r="0.9"/><circle cx="1222.8" cy="318.8" r="0.9"/><circle cx="1222.8" cy="323.8" r="0.9"/></g><rect x="1234" y="312.5" width="9.5" height="9.5" rx="1" fill="#8a8a8a" stroke-width="1.1"/><path d="M1243.5 316.5H1246.5V326H1237V322" stroke-width="1.1"/><path d="M1252.5 318L1256 321.5L1259.5 318" stroke-width="1.2"/><path d="M1201 357.5L1204.5 361L1208 357.5" stroke-width="1.3"/><circle cx="78.8" cy="501.9" r="6.6" stroke-width="1.2"/><rect x="75.3" y="498.4" width="7" height="7" rx="1" fill="#c8c8c8" stroke="none"/><path d="M97 500.2A2.6 2.6 0 1 0 97 503.8" stroke-width="1.6"/><path d="M112.5 496.5H126M112.5 502.5H126M112.5 496.5V498.5M112.5 502.5V504.5" stroke-width="1.5"/><path d="M115 499L116.5 497L118 499Z M115 505L116.5 503L118 505Z" fill="#c8c8c8" stroke="none"/><rect x="142.5" y="495.5" width="13" height="11" rx="1" stroke-width="1.1"/><rect x="146" y="500.5" width="4" height="4" stroke-width="1"/><rect x="143.5" y="496.5" width="3" height="3" fill="#888" stroke="none"/><circle cx="174.5" cy="497.5" r="2" stroke-width="1"/><rect x="181" y="495.5" width="4" height="4" stroke-width="1"/><path d="M176.5 497.5H181M174.5 499.5V505M183 499.5V505M172.5 505H176.5M181 505H185" stroke-width="1.1"/><path d="M203 505V499H205M205.5 505V496H215.5V505" stroke-width="1.1"/><rect x="206" y="499" width="9" height="6" fill="#777" stroke="none"/><rect x="232" y="495.5" width="13.5" height="10" stroke-width="1.1"/><path d="M234.5 496V505M243 496V505" stroke-width="0.9"/><rect x="235.5" y="497.5" width="6.5" height="6" fill="#888" stroke="none"/><g transform="rotate(30 75 562)"><rect x="69" y="558.5" width="12" height="7" stroke="#fff" stroke-width="1.6" fill="#c33"/></g><circle cx="99" cy="656" r="4" stroke="#fff" stroke-width="1.3"/><path d="M1068 491.5L1074.5 488L1081 491.5L1074.5 495Z" stroke-width="1.1"/><path d="M1068 494.5L1074.5 498L1081 494.5M1068 497.5L1074.5 501L1081 497.5" stroke-width="1.1"/><path d="M1126 494C1124 492.5 1123.5 491 1125 490H1133C1135.5 490 1137 491.5 1137 493.5C1137 495.5 1135.5 497 1133 497H1126" stroke="#6c6c6c" stroke-width="1.2"/><path d="M1127 487.5L1124 490L1127 492.5" stroke="#6c6c6c" stroke-width="1.2"/><rect x="1186.5" y="489.5" width="13" height="10" stroke="#6c6c6c" stroke-width="1.1"/><path d="M1186.5 492.5H1199.5M1189 489.5L1190.5 487M1193 489.5L1194.5 487" stroke="#6c6c6c" stroke-width="1"/><rect x="1046.5" y="507.5" width="15.5" height="13" rx="2.5" stroke-width="1.2"/><path d="M1071.5 512.5L1074.5 515.5L1077.5 512.5" stroke-width="1.2"/><path d="M1147.5 512.5L1151.5 516.5L1155.5 512.5" stroke-width="1.2"/><path d="M1272 511.5L1275 508.5L1278 511.5M1272 516.5L1275 519.5L1278 516.5" stroke-width="1.1"/><rect x="1075.5" y="531.5" width="8" height="8" rx="1" fill="#888" stroke="#5a5a5a" stroke-width="1"/><rect x="1078.5" y="528.5" width="8.5" height="8.5" stroke-width="1.1" stroke-dasharray="1.8 1.2"/><rect x="1077.5" y="530.5" width="7" height="7" fill="#c8c8c8" stroke="none"/><path d="M1098 529.5L1102 531.5L1106 529.5M1095.5 532.5H1098.5M1105.5 532.5H1108.5M1096.5 529L1098.5 530.5M1107.5 529L1105.5 530.5" stroke-width="1"/><circle cx="1102" cy="532" r="1.6" fill="#c8c8c8" stroke="none"/><path d="M1100.5 534H1103.5L1105 541.5H1099Z" fill="#c8c8c8" stroke="none"/><path d="M1117.5 528.5H1124V537.5L1121 541H1117.5Z" stroke-width="1.1"/><path d="M1119 532.5L1121 535.5L1123 532.5" stroke-width="1.1"/><path d="M1122.5 538.5L1126.5 541M1124.5 541.5L1128.5 539" stroke-width="0.9"/><path d="M1138 535.5V532.5A3.5 3.5 0 0 1 1145 532.5V535.5" stroke-width="1.3"/><rect x="1136.5" y="535" width="10" height="7.5" rx="1" fill="#c8c8c8" stroke="none"/><path d="M1157 536V534A2.8 2.8 0 0 1 1162.6 534V536" stroke-width="1.2"/><rect x="1155.5" y="535.5" width="8.5" height="6.5" rx="1" fill="#c8c8c8" stroke="none"/><g fill="#c8c8c8" stroke="none"><rect x="1160" y="528" width="2.5" height="2.5"/><rect x="1165" y="528" width="2.5" height="2.5"/><rect x="1162.5" y="530.5" width="2.5" height="2.5"/><rect x="1165" y="533" width="2.5" height="2.5"/></g><circle cx="1181.5" cy="534" r="4.5" stroke="#6a6a6a" stroke-width="2.4"/><path d="M1184 537L1190 543M1190 537L1184 543" stroke="#6a6a6a" stroke-width="1.3"/><path d="M1195 532.5L1198 535.5L1201 532.5" stroke="#6a6a6a" stroke-width="1.1"/><path d="M1215.5 529V541.5H1228M1215.5 541.5L1227.5 529.5" stroke="#6a6a6a" stroke-width="2"/><path d="M1221.5 537L1227.5 543M1227.5 537L1221.5 543" stroke="#6a6a6a" stroke-width="1.3"/><path d="M1231 532.5L1234 535.5L1237 532.5" stroke="#6a6a6a" stroke-width="1.1"/><rect x="1252.5" y="531" width="10" height="10" fill="#f0f0f0" stroke="none"/><rect x="1248.5" y="527.5" width="9.5" height="9.5" fill="#3a7be0" stroke="none"/><path d="M1266.5 532.5L1270 536L1273.5 532.5" stroke-width="1.2"/><rect x="1044.5" y="552.5" width="13" height="12" rx="1.5" stroke-width="1.1"/><path d="M1044.5 556.5H1057.5M1044.5 560.5H1057.5" stroke-width="1.1"/><path d="M1046.5 554.5H1048M1046.5 558.5H1048M1046.5 562.5H1048" stroke-width="1"/><path d="M1131 565H1124.5V552.5H1136.5V559" stroke-width="1.1"/><circle cx="1136" cy="563" r="3.9" fill="#4a4a4a" stroke="#c8c8c8" stroke-width="1.1"/><path d="M1136 560.8V565.2M1133.8 563H1138.2" stroke-width="1.3"/><path d="M1151 565H1144.5V552.5H1156.5V559" stroke-width="1.1"/><circle cx="1150" cy="557.5" r="2.8" stroke-width="1"/><circle cx="1156" cy="563" r="3.9" fill="#4a4a4a" stroke="#c8c8c8" stroke-width="1.1"/><path d="M1156 560.8V565.2M1153.8 563H1158.2" stroke-width="1.3"/><path d="M1163.5 564.5V554C1163.5 553.3 1164 552.8 1164.7 552.8H1168L1169.5 554.5H1176.5V559" stroke-width="1.1"/><rect x="1164" y="555.5" width="12" height="8" fill="#c8c8c8" stroke="none"/><circle cx="1176" cy="563" r="3.9" fill="#4a4a4a" stroke="#c8c8c8" stroke-width="1.1"/><path d="M1176 560.8V565.2M1173.8 563H1178.2" stroke-width="1.3"/><rect x="1190" y="552.5" width="8" height="8" stroke="#707070" stroke-width="1.1"/><rect x="1184.5" y="557.5" width="8" height="8" fill="#4a4a4a" stroke="#707070" stroke-width="1.1"/><path d="M1187 563L1191 559" stroke="#707070" stroke-width="1.1"/><rect x="1210" y="552.5" width="8" height="8" stroke-width="1.1"/><rect x="1204" y="557.5" width="8.5" height="8" fill="#4a4a4a" stroke-width="1.1"/><path d="M1206.5 563L1210.5 559M1207 559H1210.5V562.5" stroke-width="1"/><rect x="1224.5" y="552" width="13" height="13" rx="1.5" fill="#c8c8c8" stroke="none"/><circle cx="1231" cy="558.5" r="4.5" fill="#3a3a3a" stroke="none"/><rect x="1243.5" y="554.5" width="15.5" height="11" rx="1" stroke="#6a6a6a" stroke-width="1.1"/><circle cx="1253" cy="560" r="3" fill="#6a6a6a" stroke="none"/><rect x="1245" y="552.5" width="4" height="2" fill="#6a6a6a" stroke="none"/><path d="M1264 555.5H1277M1267.5 555.5V553.5H1273.5V555.5M1265.5 555.5L1266.5 565.5H1274.5L1275.5 555.5M1268.5 557.5V563.5M1270.5 557.5V563.5M1272.5 557.5V563.5" stroke-width="1.1"/><path d="M1044 587.5C1046 584.0 1049 583.5 1051 583.5C1053 583.5 1056 584.0 1058 587.5" stroke-width="1.3"/><circle cx="1051" cy="588.0" r="2.6" fill="#c8c8c8" stroke="none"/><path d="M1044 620.5C1046 617.0 1049 616.5 1051 616.5C1053 616.5 1056 617.0 1058 620.5" stroke-width="1.3"/><circle cx="1051" cy="621.0" r="2.6" fill="#c8c8c8" stroke="none"/><path d="M1063.5 594.5H1075.5" stroke-width="1.2"/><path d="M1064.5 592.5L1066 588.5L1073 581.5L1075.5 584L1068.5 591Z" stroke-width="1.1"/><rect x="1065.5" y="615" width="9" height="9" rx="1.5" stroke="#555" stroke-width="1.1"/><rect x="1135.5" y="610.5" width="11" height="10.5" stroke="#222" stroke-width="1" fill="#fff"/><circle cx="532" cy="670" r="4.5" stroke-width="1.1"/><circle cx="549" cy="670" r="4.5" stroke-width="1.1"/><circle cx="568" cy="670" r="4.5" stroke-width="1.1"/><path d="M568 665.5V670" stroke-width="1.1"/><path d="M585 666L582.5 669.5" stroke-width="1.1"/><path d="M979.5 666L982 668.5" stroke-width="1.1"/><circle cx="22.3" cy="94.5" r="6.6"/><path d="M27.2 99.4L32.3 104.4" stroke-width="1.8"/><path fill="#c8c8c8" stroke="none" d="M18.5 127.5C17 125.5 15.5 123 15.2 121.2C15 120 16.2 119.6 17 120.4L19.3 122.8L18.6 115.2C18.5 114 20.2 113.8 20.4 115L21.3 120.6L21.6 113.6C21.7 112.4 23.4 112.4 23.5 113.6L23.8 120.5L25.3 114.2C25.6 113 27.2 113.3 27 114.5L26.2 121L28.8 116.3C29.4 115.3 30.9 115.9 30.5 117L28 124.5C27.2 127.2 25.8 129 23.5 129L21 129C20 129 19.2 128.5 18.5 127.5Z"/><path d="M15.2 141.5L21.5 137.8L27.8 141.5L27.8 147.5L21.5 151.2L15.2 147.5Z M15.2 141.5L21.5 145L27.8 141.5 M21.5 145L21.5 151.2" stroke-width="1.1"/><path fill="#c8c8c8" stroke="#474747" stroke-width="0.8" d="M24.8 144.6L33.2 150.2L29.6 150.8L32.6 154.6L30.8 155.8L28 151.8L26 154.4Z"/><path d="M24.3 164L24.3 179.5M16.5 171.6L32 171.6" stroke-width="1.4"/><path fill="#c8c8c8" stroke="none" d="M24.3 161.6L27.3 165.4L21.3 165.4Z M24.3 181.6L27.3 177.8L21.3 177.8Z M14.4 171.6L18.2 168.6L18.2 174.6Z M34.4 171.6L30.6 168.6L30.6 174.6Z"/><rect x="16.5" y="188.6" width="15.4" height="14.8" stroke-dasharray="2.2 1.8" stroke-width="1.3"/><path d="M25.5 212L25.5 226M18.5 219L32.5 219M20.6 214.1L30.4 223.9M30.4 214.1L20.6 223.9" stroke-width="1.3"/><circle cx="25.5" cy="219" r="2.2" fill="#c8c8c8" stroke="none"/><path d="M15 229.8L22.2 222.4" stroke-width="1.3"/><path d="M15 254.6L17 249L26 240L29.5 243.5L20.5 252.5Z M17.5 251.5L22 247" stroke-width="1.2"/><path fill="#c8c8c8" stroke="none" d="M26.5 238.5L28.5 236.5C29.8 235.2 32 235.5 33 236.6C34 237.8 34 239.7 32.8 241L30.5 243.2Z"/><path d="M15.2 282.6L17.8 275L27 268.5L31.8 273.3L25.3 282.5Z M15.2 282.6L23 274.8" stroke-width="1.2"/><path fill="#c8c8c8" stroke="none" d="M27.2 267.7L29.5 264.8L34.4 269.7L31.5 272.6Z"/><path d="M15.2 307.5L19 298.5L28.8 290.2L33.2 294.6L24.5 304.4Z M15.2 307.5L22.8 300.8" stroke="#d6dbe6" stroke-width="1.2"/><path fill="#d6dbe6" stroke="none" d="M28.5 289.8L30.8 288L34.8 292L33 294.4Z M25.8 292.5L28.8 290.2L31.2 292.6L28.6 295.2Z"/><path fill="#c8c8c8" stroke="none" d="M14.7 333.2L19 326.5C19.6 321.5 22.5 317.8 26.2 318.6L29.5 321.8C30.5 325.5 26.8 328.6 21.5 329.2Z"/><path fill="#474747" stroke="none" d="M19.6 327C20.5 323.8 22.6 321.3 25.2 321.5L27 323.4C27 326 24.2 327.8 21 328.2L22.3 326.3L21.2 324.8Z"/><path fill="#c8c8c8" stroke="none" d="M27 317.8L29.6 314.8C30.6 313.9 32.2 314 33 314.9C33.7 315.8 33.6 317.3 32.7 318.2L30 320.8Z"/><g fill="#c8c8c8" stroke="none" opacity="0.8"><rect x="15.2" y="339" width="1.8" height="1.8"/><rect x="15.2" y="342.3" width="1.8" height="1.8"/><rect x="15.2" y="345.6" width="1.8" height="1.8"/><rect x="15.2" y="348.9" width="1.8" height="1.8"/><rect x="18.2" y="340.6" width="1.8" height="1.8"/><rect x="18.2" y="343.9" width="1.8" height="1.8"/><rect x="18.2" y="347.2" width="1.8" height="1.8"/><rect x="21.2" y="342.3" width="1.8" height="1.8"/><rect x="21.2" y="345.6" width="1.8" height="1.8"/></g><path d="M23.5 345L25.6 345" stroke-width="1"/><rect x="25.6" y="342.2" width="3.2" height="5.6" rx="1.6" fill="#c8c8c8" stroke="none"/><path d="M20.6 358.2L20.6 354C20.6 350.8 23 348.6 26.6 348.6C30.2 348.6 32.6 350.8 32.6 354L32.6 358.2Z" stroke-width="1.2"/><rect x="21.2" y="353" width="10.8" height="5" fill="#c8c8c8" stroke="none"/><rect x="22.6" y="354.6" width="8" height="2" fill="#474747" stroke="none"/><path fill="#c8c8c8" stroke="none" d="M22.5 365L23.6 370.9L29.5 372L23.6 373.1L22.5 379L21.4 373.1L15.5 372L21.4 370.9Z M29.3 375.5L29.9 378.4L32.8 379L29.9 379.6L29.3 382.5L28.7 379.6L25.8 379L28.7 378.4Z"/><path fill="#c8c8c8" stroke="none" d="M21 396.2L27.6 389.6C28.2 389 29 389 29.6 389.6L33.3 393.3C33.9 393.9 33.9 394.7 33.3 395.3L26.7 401.9Z"/><path d="M21 396.2L15.2 402C14.6 402.6 14.6 403.4 15.2 404L17.8 406.6L22.1 406.6L26.7 401.9Z M17.8 407L33.2 407" stroke-width="1.2"/><defs><linearGradient id="dg" x1="0" y1="0" x2="1" y2="1"><stop offset="0" stop-color="#8a8a8a"/><stop offset="1" stop-color="#d0d0d0"/></linearGradient></defs><path fill="url(#dg)" stroke="#bdbdbd" stroke-width="0.6" d="M19 416.5L15.2 425C14 428.5 16 431.8 19.3 431.8C21 431.8 22.8 430.8 24 429.5C25.2 430.8 27 431.8 28.7 431.8C32 431.8 34 428.5 32.8 425L29 416.5L26.5 422.8L24 420L21.5 422.8Z"/><path d="M24 444.2L33.2 453L26 460.2L16 452Z" stroke-width="1.5" stroke-linejoin="round"/><path d="M18.8 449.1H28.9L33.6 453L26 461L15.4 452.2Z" fill="#c8c8c8" stroke="none"/><path d="M16.6 453V456.6" stroke-width="2.8" stroke-linecap="round"/><defs><linearGradient id="gg" x1="0" y1="0" x2="1" y2="1"><stop offset="0" stop-color="#5a5a5a"/><stop offset="0.5" stop-color="#333"/><stop offset="1" stop-color="#d6d6d6"/></linearGradient><linearGradient id="gg2" x1="1" y1="0" x2="0" y2="1"><stop offset="0" stop-color="#2f2f2f"/><stop offset="1" stop-color="#e0e0e0"/></linearGradient></defs><rect x="16.3" y="469.4" width="15.4" height="15.4" rx="1.6" fill="url(#gg2)" stroke-width="1.2"/><path d="M15.2 510.8L32.8 493.2" stroke-width="1.2"/><rect x="16.4" y="519.4" width="15.2" height="15.4" rx="1.6" stroke-width="1.2"/><path d="M16.4 523.5L31.6 523.5M16.4 529.2L24 529.2M24.8 525.8L23.2 534.8M16.4 523.5" stroke-width="1.2"/><path fill="#c8c8c8" stroke="none" fill-rule="evenodd" d="M15.4 544L33.2 544L15.4 560.8Z M18 546.5L27.4 546.5L18 555.3Z"/><path fill="#c8c8c8" stroke="none" d="M22.6 568.4L25.4 568.4L32.2 586L29.8 586L28 581.2L20 581.2L18.2 586L15.8 586Z M20.8 579L27.2 579L24 570.6Z"/><path d="M17.5 606.5C15.6 605.2 14.8 603.6 14.8 601.8C14.8 597.6 19 594.5 24 594.5C29 594.5 33.2 597.6 33.2 601.8C33.2 606 29 609 24 609C22.8 609 21.6 608.8 20.5 608.5L16.5 610.2Z" stroke-width="1.1"/><rect x="15" y="618" width="5" height="4.8" fill="#c8c8c8" stroke="none"/><path d="M20 620.4L31.8 620.4M17.5 622.8L17.5 635.5" stroke-width="1.2"/><path fill="#c8c8c8" stroke="none" d="M21 623.6L32.7 630L27.8 630.6L25.2 635.5Z"/><path d="M9.5 66.5H17.1M9.5 69.4H17.1M9.5 72.3H17.1" stroke="#9a9a9a" stroke-width="1"/><path d="M51.6 66.5H59.2M51.6 69.4H59.2M51.6 72.3H59.2" stroke="#9a9a9a" stroke-width="1"/><path d="M51.6 207.5H59.2M51.6 210.4H59.2M51.6 213.3H59.2" stroke="#9a9a9a" stroke-width="1"/><path d="M51.6 494H59.2M51.6 496.9H59.2M51.6 499.8H59.2" stroke="#9a9a9a" stroke-width="1"/><path d="M1046 66.5H1053.6M1046 69.4H1053.6M1046 72.3H1053.6" stroke="#9a9a9a" stroke-width="1"/><path d="M1046 277.5H1053.6M1046 280.4H1053.6M1046 283.3H1053.6" stroke="#9a9a9a" stroke-width="1"/><path d="M1047 488.5H1054.6M1047 491.4H1054.6M1047 494.3H1054.6" stroke="#9a9a9a" stroke-width="1"/><path fill="#c8c8c8" stroke="none" d="M30.2 79.6L31.4 75.6L40.6 66.4C41.3 65.7 42.4 65.7 43.1 66.4C43.8 67.1 43.8 68.2 43.1 68.9L33.9 78.1Z"/><path fill="#c8c8c8" stroke="none" d="M73.5 80.8L75 76.5L86.6 65.2C87.6 64.2 89 64.2 90 65.2C91 66.2 91 67.6 90 68.6L78.2 79.6Z"/><path d="M81.5 74.5H89.5M81.5 79.5H89.5M81.5 73V81M89.5 73V81" stroke-width="1.4"/><path fill="#c8c8c8" stroke="none" d="M73.5 218L75 213.8L85 204.5C85.8 203.7 87 203.7 87.8 204.5C88.6 205.3 88.6 206.5 87.8 207.3L77.8 216.8Z"/><circle cx="86" cy="214.5" r="2.6" stroke-width="1.2"/><path d="M86 210.6V211.6M86 217.4V218.4M82.1 214.5H83.1M88.9 214.5H89.9M83.3 211.8L84 212.5M88 216.5L88.7 217.2M88.7 211.8L88 212.5M84 216.5L83.3 217.2" stroke-width="1"/><path fill="#6e6e6e" stroke="none" d="M195 216.5L197 212L205.5 205C206.3 204.3 207.4 204.3 208.1 205C208.8 205.7 208.8 206.8 208.1 207.5L200 215Z M198 217H210V218H198Z"/><path d="M51 104.8L54 96L63 88.6L68.6 94.2L60.2 102.4Z M51 104.8L58 98.6" stroke="#d6dbe6" stroke-width="1.1"/><path fill="#d6dbe6" stroke="none" d="M62.8 88.2L64.6 86.8L69.4 91.4L68.4 94L64.4 93.4Z"/><path d="M155.5 99.5L166.5 88.5C167.8 87.2 169.8 87.2 171.1 88.5C172.4 89.8 172.4 91.8 171.1 93.1L160.1 104.1C158.8 105.4 156.8 105.4 155.5 104.1C154.2 102.8 154.2 100.8 155.5 99.5Z" stroke-width="1.2"/><circle cx="157.6" cy="102" r="2.3" fill="#c8c8c8" stroke="none"/><g fill="#eef0f6" stroke="none"><circle cx="95.8" cy="118.6" r="0.50" fill-opacity="0.48"/><circle cx="113.8" cy="124.0" r="0.38" fill-opacity="0.50"/><circle cx="105.1" cy="120.6" r="0.73" fill-opacity="0.77"/><circle cx="91.6" cy="118.8" r="0.47" fill-opacity="0.77"/><circle cx="125.6" cy="127.0" r="0.43" fill-opacity="0.82"/><circle cx="106.3" cy="120.6" r="0.53" fill-opacity="0.61"/><circle cx="116.2" cy="123.0" r="0.40" fill-opacity="0.68"/><circle cx="135.3" cy="127.6" r="0.37" fill-opacity="0.59"/><circle cx="121.1" cy="126.7" r="0.62" fill-opacity="0.48"/><circle cx="92.1" cy="117.9" r="0.36" fill-opacity="0.59"/><circle cx="79.3" cy="120.5" r="0.45" fill-opacity="0.42"/><circle cx="145.5" cy="123.8" r="0.57" fill-opacity="0.57"/><circle cx="153.3" cy="120.7" r="0.54" fill-opacity="0.46"/><circle cx="89.6" cy="118.8" r="0.50" fill-opacity="0.59"/><circle cx="114.9" cy="126.2" r="0.66" fill-opacity="0.93"/><circle cx="103.4" cy="120.1" r="0.37" fill-opacity="0.49"/><circle cx="84.0" cy="119.7" r="0.41" fill-opacity="0.34"/><circle cx="100.4" cy="118.4" r="0.60" fill-opacity="0.53"/><circle cx="100.3" cy="119.3" r="0.54" fill-opacity="0.50"/><circle cx="79.8" cy="120.6" r="0.56" fill-opacity="0.33"/><circle cx="117.3" cy="126.9" r="0.63" fill-opacity="0.59"/><circle cx="100.6" cy="118.2" r="0.56" fill-opacity="0.88"/><circle cx="96.9" cy="119.2" r="0.67" fill-opacity="0.90"/><circle cx="134.0" cy="126.7" r="0.49" fill-opacity="0.36"/><circle cx="84.6" cy="119.6" r="0.71" fill-opacity="0.62"/><circle cx="112.0" cy="124.3" r="0.38" fill-opacity="0.81"/><circle cx="132.0" cy="127.5" r="0.67" fill-opacity="0.43"/><circle cx="127.0" cy="128.2" r="0.40" fill-opacity="0.46"/><circle cx="115.7" cy="125.6" r="0.43" fill-opacity="0.59"/><circle cx="92.8" cy="117.3" r="0.45" fill-opacity="0.59"/><circle cx="98.6" cy="118.8" r="0.72" fill-opacity="0.73"/><circle cx="115.4" cy="123.3" r="0.53" fill-opacity="0.55"/><circle cx="96.1" cy="117.9" r="0.57" fill-opacity="0.59"/><circle cx="114.3" cy="122.7" r="0.71" fill-opacity="0.69"/><circle cx="123.4" cy="125.9" r="0.56" fill-opacity="0.71"/><circle cx="76.1" cy="120.8" r="0.38" fill-opacity="0.35"/><circle cx="127.9" cy="127.5" r="0.73" fill-opacity="0.67"/><circle cx="112.5" cy="122.5" r="0.41" fill-opacity="0.69"/><circle cx="114.2" cy="122.7" r="0.36" fill-opacity="0.75"/><circle cx="107.1" cy="122.8" r="0.60" fill-opacity="0.73"/><circle cx="90.0" cy="119.1" r="0.45" fill-opacity="0.42"/><circle cx="130.1" cy="126.5" r="0.63" fill-opacity="0.61"/><circle cx="108.7" cy="122.4" r="0.40" fill-opacity="0.74"/><circle cx="86.7" cy="118.9" r="0.37" fill-opacity="0.40"/><circle cx="94.7" cy="117.7" r="0.42" fill-opacity="0.60"/><circle cx="118.0" cy="126.1" r="0.72" fill-opacity="0.51"/><circle cx="112.5" cy="120.9" r="0.74" fill-opacity="0.64"/><circle cx="124.9" cy="126.6" r="0.37" fill-opacity="0.52"/><circle cx="88.2" cy="119.1" r="0.62" fill-opacity="0.46"/><circle cx="87.6" cy="118.2" r="0.41" fill-opacity="0.50"/><circle cx="93.5" cy="117.4" r="0.55" fill-opacity="0.52"/><circle cx="113.5" cy="124.3" r="0.39" fill-opacity="0.67"/><circle cx="65.2" cy="122.7" r="0.56" fill-opacity="0.51"/><circle cx="126.4" cy="127.8" r="0.71" fill-opacity="0.80"/><circle cx="114.4" cy="124.1" r="0.71" fill-opacity="0.83"/><circle cx="129.4" cy="126.4" r="0.40" fill-opacity="0.60"/><circle cx="119.0" cy="124.3" r="0.35" fill-opacity="0.89"/><circle cx="115.9" cy="122.8" r="0.64" fill-opacity="0.59"/><circle cx="133.6" cy="127.4" r="0.50" fill-opacity="0.57"/><circle cx="123.1" cy="126.2" r="0.41" fill-opacity="0.59"/><circle cx="134.4" cy="126.8" r="0.46" fill-opacity="0.62"/><circle cx="109.3" cy="122.0" r="0.71" fill-opacity="0.56"/><circle cx="107.8" cy="122.1" r="0.58" fill-opacity="0.53"/><circle cx="114.8" cy="123.5" r="0.68" fill-opacity="0.73"/><circle cx="111.1" cy="121.2" r="0.47" fill-opacity="0.53"/><circle cx="98.2" cy="118.0" r="0.35" fill-opacity="0.86"/><circle cx="143.0" cy="124.8" r="0.47" fill-opacity="0.41"/><circle cx="121.2" cy="123.4" r="0.46" fill-opacity="0.48"/><circle cx="88.1" cy="118.9" r="0.73" fill-opacity="0.69"/><circle cx="116.9" cy="125.6" r="0.64" fill-opacity="0.70"/><circle cx="92.5" cy="118.5" r="0.49" fill-opacity="0.52"/><circle cx="102.2" cy="120.1" r="0.43" fill-opacity="0.95"/><circle cx="113.8" cy="124.5" r="0.41" fill-opacity="0.56"/><circle cx="104.9" cy="120.0" r="0.50" fill-opacity="0.64"/><circle cx="154.8" cy="120.0" r="0.44" fill-opacity="0.35"/><circle cx="108.8" cy="119.5" r="0.70" fill-opacity="0.46"/><circle cx="120.7" cy="127.4" r="0.69" fill-opacity="0.98"/><circle cx="87.5" cy="118.5" r="0.56" fill-opacity="0.61"/><circle cx="108.3" cy="121.8" r="0.72" fill-opacity="0.81"/><circle cx="93.1" cy="117.5" r="0.60" fill-opacity="0.76"/><circle cx="73.2" cy="121.3" r="0.44" fill-opacity="0.47"/><circle cx="109.7" cy="121.2" r="0.70" fill-opacity="0.71"/><circle cx="87.5" cy="119.0" r="0.36" fill-opacity="0.51"/><circle cx="128.0" cy="126.5" r="0.62" fill-opacity="0.96"/><circle cx="85.7" cy="118.8" r="0.43" fill-opacity="0.62"/><circle cx="86.8" cy="119.4" r="0.47" fill-opacity="0.68"/><circle cx="112.3" cy="121.2" r="0.73" fill-opacity="0.53"/><circle cx="103.5" cy="120.0" r="0.41" fill-opacity="0.48"/><circle cx="134.9" cy="126.3" r="0.48" fill-opacity="0.41"/><circle cx="106.5" cy="121.4" r="0.50" fill-opacity="0.96"/><circle cx="148.0" cy="123.1" r="0.37" fill-opacity="0.28"/><circle cx="124.1" cy="124.8" r="0.48" fill-opacity="0.60"/><circle cx="152.3" cy="120.5" r="0.73" fill-opacity="0.39"/><circle cx="112.2" cy="123.5" r="0.67" fill-opacity="0.86"/><circle cx="122.4" cy="124.9" r="0.38" fill-opacity="0.56"/><circle cx="134.3" cy="127.1" r="0.36" fill-opacity="0.55"/><circle cx="89.1" cy="117.7" r="0.53" fill-opacity="0.45"/><circle cx="105.6" cy="120.2" r="0.65" fill-opacity="0.92"/><circle cx="128.2" cy="126.7" r="0.50" fill-opacity="0.86"/><circle cx="82.6" cy="120.3" r="0.41" fill-opacity="0.61"/><circle cx="120.0" cy="126.7" r="0.44" fill-opacity="0.89"/><circle cx="149.5" cy="122.3" r="0.40" fill-opacity="0.33"/><circle cx="152.8" cy="121.0" r="0.50" fill-opacity="0.31"/><circle cx="83.6" cy="119.7" r="0.61" fill-opacity="0.37"/><circle cx="128.4" cy="127.4" r="0.57" fill-opacity="0.47"/><circle cx="117.4" cy="126.8" r="0.42" fill-opacity="0.83"/><circle cx="104.1" cy="120.7" r="0.58" fill-opacity="0.65"/><circle cx="105.7" cy="119.7" r="0.50" fill-opacity="0.56"/><circle cx="132.1" cy="127.3" r="0.68" fill-opacity="0.54"/><circle cx="79.6" cy="120.4" r="0.61" fill-opacity="0.59"/><circle cx="100.0" cy="118.4" r="0.72" fill-opacity="0.51"/><circle cx="113.1" cy="124.4" r="0.43" fill-opacity="0.52"/><circle cx="112.2" cy="120.4" r="0.60" fill-opacity="0.90"/><circle cx="81.1" cy="120.7" r="0.56" fill-opacity="0.42"/><circle cx="135.9" cy="126.9" r="0.57" fill-opacity="0.58"/><circle cx="94.0" cy="118.4" r="0.52" fill-opacity="0.74"/><circle cx="107.5" cy="120.2" r="0.44" fill-opacity="0.87"/><circle cx="72.5" cy="121.4" r="0.39" fill-opacity="0.42"/><circle cx="114.5" cy="125.3" r="0.66" fill-opacity="0.73"/><circle cx="141.0" cy="125.7" r="0.55" fill-opacity="0.62"/><circle cx="150.3" cy="122.4" r="0.49" fill-opacity="0.52"/><circle cx="94.6" cy="117.7" r="0.41" fill-opacity="0.93"/><circle cx="125.8" cy="125.6" r="0.70" fill-opacity="0.51"/><circle cx="102.4" cy="118.8" r="0.75" fill-opacity="0.77"/><circle cx="108.2" cy="123.3" r="0.45" fill-opacity="0.80"/><circle cx="126.8" cy="127.4" r="0.36" fill-opacity="0.53"/><circle cx="123.4" cy="126.7" r="0.44" fill-opacity="0.81"/><circle cx="63.4" cy="122.8" r="0.39" fill-opacity="0.38"/><circle cx="121.5" cy="125.1" r="0.72" fill-opacity="0.58"/><circle cx="77.9" cy="120.9" r="0.70" fill-opacity="0.54"/><circle cx="102.8" cy="118.7" r="0.49" fill-opacity="0.81"/><circle cx="108.2" cy="119.9" r="0.45" fill-opacity="0.95"/><circle cx="103.3" cy="119.7" r="0.57" fill-opacity="0.97"/><circle cx="77.4" cy="120.9" r="0.55" fill-opacity="0.49"/><circle cx="139.9" cy="125.4" r="0.71" fill-opacity="0.56"/><circle cx="132.4" cy="127.1" r="0.65" fill-opacity="0.59"/><circle cx="85.5" cy="119.6" r="0.65" fill-opacity="0.58"/><circle cx="107.0" cy="121.1" r="0.46" fill-opacity="0.80"/><circle cx="146.0" cy="123.6" r="0.73" fill-opacity="0.52"/><circle cx="96.6" cy="119.0" r="0.60" fill-opacity="0.83"/><circle cx="110.6" cy="123.0" r="0.64" fill-opacity="0.76"/><circle cx="94.1" cy="117.4" r="0.38" fill-opacity="0.88"/><circle cx="76.6" cy="121.1" r="0.41" fill-opacity="0.28"/><circle cx="125.5" cy="126.3" r="0.38" fill-opacity="0.77"/><circle cx="73.7" cy="121.7" r="0.68" fill-opacity="0.48"/><circle cx="91.2" cy="117.4" r="0.65" fill-opacity="0.48"/><circle cx="94.4" cy="117.8" r="0.64" fill-opacity="0.63"/><circle cx="113.7" cy="124.3" r="0.36" fill-opacity="0.68"/><circle cx="106.7" cy="120.4" r="0.44" fill-opacity="0.92"/><circle cx="79.5" cy="120.2" r="0.65" fill-opacity="0.62"/><circle cx="111.8" cy="121.6" r="0.68" fill-opacity="0.59"/><circle cx="113.3" cy="123.1" r="0.38" fill-opacity="0.88"/><circle cx="124.3" cy="125.0" r="0.38" fill-opacity="0.94"/><circle cx="114.1" cy="124.9" r="0.44" fill-opacity="0.70"/><circle cx="116.6" cy="123.3" r="0.48" fill-opacity="0.54"/><circle cx="134.2" cy="126.4" r="0.66" fill-opacity="0.58"/><circle cx="78.3" cy="120.5" r="0.41" fill-opacity="0.39"/><circle cx="133.6" cy="127.4" r="0.39" fill-opacity="0.53"/><circle cx="102.2" cy="119.5" r="0.55" fill-opacity="0.80"/><circle cx="110.1" cy="120.0" r="0.51" fill-opacity="0.86"/><circle cx="119.7" cy="125.5" r="0.70" fill-opacity="0.88"/><circle cx="108.9" cy="123.5" r="0.39" fill-opacity="0.68"/><circle cx="124.7" cy="125.4" r="0.51" fill-opacity="0.82"/><circle cx="151.8" cy="121.7" r="0.66" fill-opacity="0.39"/><circle cx="111.6" cy="122.1" r="0.66" fill-opacity="0.97"/><circle cx="115.2" cy="123.5" r="0.57" fill-opacity="0.84"/><circle cx="114.8" cy="122.1" r="0.73" fill-opacity="0.57"/><circle cx="129.8" cy="127.0" r="0.40" fill-opacity="0.95"/><circle cx="98.5" cy="118.1" r="0.52" fill-opacity="0.68"/><circle cx="130.1" cy="127.1" r="0.44" fill-opacity="0.77"/><circle cx="102.1" cy="119.5" r="0.60" fill-opacity="0.71"/><circle cx="119.5" cy="122.7" r="0.49" fill-opacity="0.80"/><circle cx="110.4" cy="123.8" r="0.49" fill-opacity="0.92"/><circle cx="89.7" cy="119.0" r="0.52" fill-opacity="0.43"/><circle cx="91.1" cy="117.6" r="0.60" fill-opacity="0.67"/><circle cx="144.4" cy="124.5" r="0.71" fill-opacity="0.54"/><circle cx="124.0" cy="127.8" r="0.45" fill-opacity="0.51"/><circle cx="139.1" cy="125.7" r="0.59" fill-opacity="0.59"/><circle cx="116.1" cy="125.3" r="0.46" fill-opacity="0.58"/><circle cx="113.7" cy="121.9" r="0.35" fill-opacity="0.91"/><circle cx="110.6" cy="122.8" r="0.52" fill-opacity="0.98"/><circle cx="125.3" cy="125.9" r="0.62" fill-opacity="0.96"/><circle cx="114.9" cy="125.5" r="0.60" fill-opacity="0.64"/><circle cx="111.1" cy="122.7" r="0.43" fill-opacity="0.69"/><circle cx="106.2" cy="119.7" r="0.51" fill-opacity="0.73"/><circle cx="95.3" cy="119.0" r="0.60" fill-opacity="0.85"/><circle cx="63.2" cy="122.8" r="0.67" fill-opacity="0.56"/><circle cx="123.3" cy="125.2" r="0.63" fill-opacity="0.78"/><circle cx="129.3" cy="126.0" r="0.39" fill-opacity="0.53"/><circle cx="88.8" cy="118.8" r="0.48" fill-opacity="0.52"/><circle cx="65.6" cy="122.2" r="0.53" fill-opacity="0.27"/><circle cx="102.6" cy="118.0" r="0.74" fill-opacity="0.71"/><circle cx="104.7" cy="120.0" r="0.36" fill-opacity="0.45"/><circle cx="130.2" cy="127.4" r="0.39" fill-opacity="0.89"/><circle cx="75.6" cy="121.2" r="0.42" fill-opacity="0.29"/><circle cx="63.0" cy="123.4" r="0.68" fill-opacity="0.29"/><circle cx="111.7" cy="121.4" r="0.62" fill-opacity="0.53"/><circle cx="125.7" cy="126.4" r="0.50" fill-opacity="0.88"/><circle cx="118.8" cy="126.9" r="0.68" fill-opacity="0.63"/><circle cx="94.9" cy="117.7" r="0.50" fill-opacity="0.77"/><circle cx="122.8" cy="126.0" r="0.46" fill-opacity="0.68"/><circle cx="121.5" cy="125.6" r="0.37" fill-opacity="0.91"/><circle cx="120.4" cy="125.8" r="0.72" fill-opacity="0.64"/><circle cx="139.2" cy="125.3" r="0.72" fill-opacity="0.38"/><circle cx="122.6" cy="126.3" r="0.65" fill-opacity="0.89"/><circle cx="110.0" cy="122.7" r="0.66" fill-opacity="0.58"/><circle cx="121.2" cy="124.2" r="0.59" fill-opacity="0.55"/><circle cx="82.9" cy="120.0" r="0.50" fill-opacity="0.49"/><circle cx="103.0" cy="123.0" r="0.50" fill-opacity="0.51"/><circle cx="96.9" cy="118.7" r="0.36" fill-opacity="0.99"/><circle cx="119.9" cy="122.5" r="0.66" fill-opacity="0.90"/><circle cx="80.6" cy="120.6" r="0.57" fill-opacity="0.59"/><circle cx="109.7" cy="123.2" r="0.51" fill-opacity="0.52"/><circle cx="119.9" cy="125.6" r="0.62" fill-opacity="0.67"/><circle cx="109.0" cy="122.2" r="0.37" fill-opacity="0.59"/><circle cx="155.3" cy="119.8" r="0.65" fill-opacity="0.57"/><circle cx="128.9" cy="127.1" r="0.48" fill-opacity="0.58"/><circle cx="83.3" cy="119.9" r="0.44" fill-opacity="0.63"/><circle cx="109.2" cy="119.7" r="0.41" fill-opacity="0.57"/><circle cx="118.6" cy="124.9" r="0.46" fill-opacity="0.68"/><circle cx="128.0" cy="126.9" r="0.43" fill-opacity="0.65"/><circle cx="150.8" cy="122.0" r="0.71" fill-opacity="0.29"/><circle cx="133.7" cy="127.7" r="0.49" fill-opacity="0.42"/><circle cx="115.7" cy="124.1" r="0.71" fill-opacity="0.57"/><circle cx="119.3" cy="125.5" r="0.43" fill-opacity="0.49"/><circle cx="112.2" cy="120.9" r="0.59" fill-opacity="0.84"/><circle cx="83.8" cy="119.4" r="0.37" fill-opacity="0.59"/><circle cx="110.7" cy="123.6" r="0.42" fill-opacity="0.91"/><circle cx="100.0" cy="118.4" r="0.56" fill-opacity="0.70"/><circle cx="115.0" cy="123.5" r="0.68" fill-opacity="0.93"/><circle cx="100.8" cy="120.5" r="0.55" fill-opacity="0.73"/><circle cx="115.4" cy="121.7" r="0.74" fill-opacity="0.57"/><circle cx="80.9" cy="120.3" r="0.39" fill-opacity="0.53"/><circle cx="82.7" cy="120.0" r="0.58" fill-opacity="0.48"/><circle cx="131.4" cy="127.0" r="0.40" fill-opacity="0.64"/><circle cx="112.9" cy="122.8" r="0.51" fill-opacity="0.53"/><circle cx="121.1" cy="124.2" r="0.42" fill-opacity="0.90"/><circle cx="105.3" cy="119.3" r="0.51" fill-opacity="0.97"/><circle cx="107.5" cy="122.7" r="0.69" fill-opacity="0.48"/><circle cx="115.7" cy="122.4" r="0.45" fill-opacity="0.68"/><circle cx="124.9" cy="127.4" r="0.55" fill-opacity="0.46"/><circle cx="106.6" cy="121.3" r="0.47" fill-opacity="0.81"/><circle cx="115.9" cy="124.9" r="0.51" fill-opacity="0.61"/><circle cx="87.7" cy="119.1" r="0.69" fill-opacity="0.57"/><circle cx="119.0" cy="124.8" r="0.57" fill-opacity="0.79"/><circle cx="109.9" cy="120.7" r="0.44" fill-opacity="0.73"/><circle cx="100.7" cy="117.7" r="0.45" fill-opacity="0.76"/><circle cx="113.1" cy="124.9" r="0.47" fill-opacity="0.87"/><circle cx="79.7" cy="120.5" r="0.51" fill-opacity="0.43"/><circle cx="133.2" cy="126.8" r="0.73" fill-opacity="0.67"/><circle cx="98.7" cy="119.0" r="0.56" fill-opacity="0.86"/><circle cx="111.4" cy="120.4" r="0.72" fill-opacity="0.52"/><circle cx="145.6" cy="123.8" r="0.74" fill-opacity="0.46"/><circle cx="105.9" cy="119.5" r="0.59" fill-opacity="0.66"/><circle cx="109.0" cy="121.1" r="0.57" fill-opacity="0.66"/><circle cx="107.5" cy="122.3" r="0.41" fill-opacity="0.77"/><circle cx="121.2" cy="124.5" r="0.69" fill-opacity="0.98"/><circle cx="148.7" cy="122.9" r="0.58" fill-opacity="0.43"/><circle cx="116.9" cy="122.3" r="0.51" fill-opacity="0.65"/><circle cx="122.3" cy="125.6" r="0.62" fill-opacity="0.74"/><circle cx="103.7" cy="121.5" r="0.54" fill-opacity="0.69"/><circle cx="98.1" cy="116.6" r="0.42" fill-opacity="0.62"/><circle cx="115.3" cy="122.6" r="0.75" fill-opacity="0.94"/><circle cx="105.4" cy="118.3" r="0.55" fill-opacity="0.73"/><circle cx="82.4" cy="119.9" r="0.75" fill-opacity="0.51"/><circle cx="129.5" cy="126.7" r="0.69" fill-opacity="0.72"/><circle cx="128.0" cy="126.5" r="0.61" fill-opacity="0.74"/><circle cx="103.9" cy="119.5" r="0.65" fill-opacity="0.51"/><circle cx="72.2" cy="121.8" r="0.67" fill-opacity="0.29"/><circle cx="98.1" cy="117.1" r="0.39" fill-opacity="0.95"/><circle cx="120.5" cy="125.2" r="0.71" fill-opacity="0.77"/><circle cx="123.0" cy="126.5" r="0.72" fill-opacity="0.92"/><circle cx="112.3" cy="121.3" r="0.44" fill-opacity="0.62"/><circle cx="137.9" cy="126.2" r="0.49" fill-opacity="0.37"/><circle cx="118.8" cy="123.9" r="0.38" fill-opacity="0.52"/><circle cx="87.3" cy="119.2" r="0.44" fill-opacity="0.34"/><circle cx="127.1" cy="126.9" r="0.46" fill-opacity="0.91"/><circle cx="133.3" cy="126.7" r="0.43" fill-opacity="0.79"/><circle cx="113.8" cy="124.7" r="0.45" fill-opacity="0.94"/><circle cx="120.9" cy="126.9" r="0.59" fill-opacity="0.57"/><circle cx="145.6" cy="123.7" r="0.66" fill-opacity="0.40"/><circle cx="126.6" cy="126.7" r="0.51" fill-opacity="0.50"/><circle cx="99.0" cy="119.0" r="0.44" fill-opacity="0.52"/><circle cx="132.1" cy="127.1" r="0.71" fill-opacity="0.73"/><circle cx="127.5" cy="126.4" r="0.45" fill-opacity="0.92"/><circle cx="98.0" cy="117.1" r="0.40" fill-opacity="0.95"/><circle cx="64.6" cy="122.8" r="0.50" fill-opacity="0.28"/><circle cx="119.1" cy="126.1" r="0.52" fill-opacity="0.83"/><circle cx="98.6" cy="118.2" r="0.37" fill-opacity="0.92"/><circle cx="122.3" cy="125.2" r="0.39" fill-opacity="0.89"/><circle cx="134.9" cy="126.1" r="0.68" fill-opacity="0.45"/><circle cx="106.0" cy="121.5" r="0.65" fill-opacity="0.91"/><circle cx="123.7" cy="126.2" r="0.55" fill-opacity="0.96"/><circle cx="117.9" cy="123.2" r="0.57" fill-opacity="0.59"/><circle cx="104.1" cy="121.0" r="0.62" fill-opacity="0.58"/><circle cx="107.6" cy="122.6" r="0.47" fill-opacity="0.94"/><circle cx="117.1" cy="123.7" r="0.53" fill-opacity="0.87"/><circle cx="141.3" cy="124.8" r="0.49" fill-opacity="0.35"/><circle cx="108.0" cy="120.1" r="0.42" fill-opacity="0.49"/><circle cx="135.3" cy="126.7" r="0.74" fill-opacity="0.56"/><circle cx="107.1" cy="123.5" r="0.61" fill-opacity="0.80"/><circle cx="87.9" cy="118.8" r="0.36" fill-opacity="0.65"/><circle cx="96.5" cy="117.6" r="0.57" fill-opacity="0.65"/><circle cx="112.8" cy="124.2" r="0.58" fill-opacity="0.49"/><circle cx="129.7" cy="127.3" r="0.37" fill-opacity="0.65"/><circle cx="106.4" cy="120.4" r="0.56" fill-opacity="0.68"/><circle cx="97.5" cy="118.7" r="0.42" fill-opacity="0.61"/><circle cx="107.6" cy="118.8" r="0.43" fill-opacity="0.50"/><circle cx="96.3" cy="119.0" r="0.74" fill-opacity="0.97"/><circle cx="123.1" cy="125.3" r="0.62" fill-opacity="0.79"/><circle cx="126.0" cy="127.0" r="0.43" fill-opacity="0.82"/><circle cx="108.5" cy="121.1" r="0.50" fill-opacity="0.77"/><circle cx="105.0" cy="119.5" r="0.42" fill-opacity="0.94"/><circle cx="118.2" cy="124.9" r="0.45" fill-opacity="0.50"/><circle cx="116.2" cy="123.1" r="0.58" fill-opacity="0.51"/><circle cx="114.0" cy="123.2" r="0.51" fill-opacity="0.49"/><circle cx="107.5" cy="120.5" r="0.40" fill-opacity="0.99"/><circle cx="133.1" cy="126.1" r="0.51" fill-opacity="0.45"/><circle cx="137.2" cy="126.5" r="0.50" fill-opacity="0.32"/><circle cx="121.3" cy="126.0" r="0.63" fill-opacity="0.68"/><circle cx="132.7" cy="127.4" r="0.67" fill-opacity="0.42"/><circle cx="88.8" cy="118.9" r="0.69" fill-opacity="0.58"/><circle cx="73.1" cy="121.5" r="0.57" fill-opacity="0.37"/><circle cx="128.8" cy="126.7" r="0.70" fill-opacity="0.70"/><circle cx="152.8" cy="121.2" r="0.70" fill-opacity="0.53"/><circle cx="65.2" cy="123.0" r="0.62" fill-opacity="0.39"/><circle cx="111.7" cy="120.3" r="0.59" fill-opacity="0.49"/><circle cx="97.0" cy="118.7" r="0.59" fill-opacity="0.47"/><circle cx="110.1" cy="122.0" r="0.58" fill-opacity="0.63"/><circle cx="155.3" cy="119.9" r="0.62" fill-opacity="0.35"/><circle cx="116.6" cy="125.5" r="0.66" fill-opacity="0.93"/><circle cx="124.8" cy="126.9" r="0.67" fill-opacity="0.93"/><circle cx="125.2" cy="126.4" r="0.48" fill-opacity="0.63"/><circle cx="99.8" cy="118.7" r="0.49" fill-opacity="0.52"/></g><path d="M73.3 154C80 150.6 88 149.6 96 150.4C108 151.6 118 157 128 158.6C136 159.4 142 158.4 147 156.6C141 160.6 134 162.3 126.5 162.2C116 161.6 107 156.8 96.5 154.5C88 152.8 80 153 73.3 154Z" fill="#d6d6d6" fill-opacity="0.92" stroke="none"/><g fill="#3c3c3c" stroke="none"><circle cx="108.8" cy="153.3" r="0.48" fill-opacity="0.27"/><circle cx="113.3" cy="156.1" r="0.33" fill-opacity="0.32"/><circle cx="124.8" cy="161.0" r="0.48" fill-opacity="0.26"/><circle cx="75.3" cy="153.3" r="0.31" fill-opacity="0.25"/><circle cx="107.0" cy="153.5" r="0.50" fill-opacity="0.38"/><circle cx="124.7" cy="159.4" r="0.39" fill-opacity="0.23"/><circle cx="129.4" cy="159.3" r="0.55" fill-opacity="0.19"/><circle cx="109.7" cy="156.9" r="0.32" fill-opacity="0.45"/><circle cx="129.2" cy="159.7" r="0.53" fill-opacity="0.23"/><circle cx="88.2" cy="152.5" r="0.54" fill-opacity="0.27"/><circle cx="115.9" cy="156.9" r="0.49" fill-opacity="0.25"/><circle cx="104.9" cy="153.3" r="0.59" fill-opacity="0.52"/><circle cx="86.5" cy="150.9" r="0.60" fill-opacity="0.26"/><circle cx="95.3" cy="151.5" r="0.33" fill-opacity="0.43"/><circle cx="101.0" cy="151.5" r="0.56" fill-opacity="0.27"/><circle cx="132.4" cy="160.2" r="0.52" fill-opacity="0.48"/><circle cx="104.5" cy="154.7" r="0.51" fill-opacity="0.30"/><circle cx="92.9" cy="151.2" r="0.32" fill-opacity="0.29"/><circle cx="116.5" cy="156.5" r="0.36" fill-opacity="0.21"/><circle cx="90.2" cy="152.7" r="0.35" fill-opacity="0.35"/><circle cx="116.9" cy="159.6" r="0.50" fill-opacity="0.48"/><circle cx="117.2" cy="155.7" r="0.31" fill-opacity="0.56"/><circle cx="110.6" cy="155.8" r="0.46" fill-opacity="0.49"/><circle cx="116.9" cy="157.2" r="0.47" fill-opacity="0.44"/><circle cx="126.7" cy="159.7" r="0.55" fill-opacity="0.23"/><circle cx="128.2" cy="160.2" r="0.44" fill-opacity="0.29"/><circle cx="124.6" cy="160.5" r="0.30" fill-opacity="0.32"/><circle cx="122.8" cy="159.4" r="0.57" fill-opacity="0.46"/><circle cx="106.7" cy="154.0" r="0.43" fill-opacity="0.52"/><circle cx="101.3" cy="152.4" r="0.34" fill-opacity="0.40"/><circle cx="91.4" cy="151.1" r="0.42" fill-opacity="0.45"/><circle cx="112.5" cy="156.3" r="0.59" fill-opacity="0.38"/><circle cx="77.0" cy="153.7" r="0.47" fill-opacity="0.22"/><circle cx="130.3" cy="160.6" r="0.44" fill-opacity="0.19"/><circle cx="133.4" cy="160.6" r="0.43" fill-opacity="0.37"/><circle cx="83.5" cy="151.6" r="0.51" fill-opacity="0.23"/><circle cx="91.2" cy="150.1" r="0.53" fill-opacity="0.36"/><circle cx="125.9" cy="160.2" r="0.49" fill-opacity="0.56"/><circle cx="101.5" cy="153.5" r="0.44" fill-opacity="0.46"/><circle cx="126.2" cy="158.5" r="0.59" fill-opacity="0.59"/><circle cx="114.4" cy="158.2" r="0.40" fill-opacity="0.23"/><circle cx="107.4" cy="153.2" r="0.45" fill-opacity="0.21"/><circle cx="132.9" cy="160.4" r="0.54" fill-opacity="0.22"/><circle cx="110.7" cy="156.4" r="0.37" fill-opacity="0.41"/><circle cx="121.7" cy="158.1" r="0.41" fill-opacity="0.54"/><circle cx="141.1" cy="158.4" r="0.59" fill-opacity="0.29"/><circle cx="117.2" cy="155.8" r="0.31" fill-opacity="0.59"/><circle cx="113.8" cy="155.9" r="0.47" fill-opacity="0.40"/><circle cx="124.1" cy="158.1" r="0.58" fill-opacity="0.31"/><circle cx="109.7" cy="156.5" r="0.54" fill-opacity="0.56"/><circle cx="109.9" cy="153.3" r="0.34" fill-opacity="0.51"/><circle cx="73.5" cy="153.4" r="0.51" fill-opacity="0.20"/><circle cx="97.8" cy="152.3" r="0.45" fill-opacity="0.30"/><circle cx="106.3" cy="153.6" r="0.46" fill-opacity="0.26"/><circle cx="121.7" cy="157.5" r="0.37" fill-opacity="0.50"/><circle cx="95.5" cy="150.6" r="0.37" fill-opacity="0.60"/><circle cx="139.1" cy="158.8" r="0.33" fill-opacity="0.38"/><circle cx="104.6" cy="153.1" r="0.42" fill-opacity="0.47"/><circle cx="74.0" cy="154.5" r="0.33" fill-opacity="0.25"/><circle cx="128.7" cy="159.6" r="0.36" fill-opacity="0.22"/><circle cx="78.3" cy="152.2" r="0.34" fill-opacity="0.19"/><circle cx="78.6" cy="152.7" r="0.44" fill-opacity="0.35"/><circle cx="96.1" cy="150.8" r="0.30" fill-opacity="0.48"/><circle cx="135.6" cy="159.9" r="0.52" fill-opacity="0.28"/><circle cx="85.0" cy="152.3" r="0.54" fill-opacity="0.42"/><circle cx="103.4" cy="153.7" r="0.59" fill-opacity="0.52"/><circle cx="133.6" cy="160.7" r="0.53" fill-opacity="0.43"/><circle cx="102.7" cy="152.3" r="0.40" fill-opacity="0.39"/><circle cx="120.7" cy="160.2" r="0.40" fill-opacity="0.46"/><circle cx="117.0" cy="156.7" r="0.60" fill-opacity="0.46"/><circle cx="145.9" cy="157.2" r="0.42" fill-opacity="0.14"/><circle cx="84.4" cy="150.8" r="0.38" fill-opacity="0.49"/><circle cx="116.7" cy="153.5" r="0.49" fill-opacity="0.52"/><circle cx="129.1" cy="159.6" r="0.35" fill-opacity="0.38"/><circle cx="120.1" cy="157.1" r="0.48" fill-opacity="0.35"/><circle cx="92.1" cy="151.7" r="0.39" fill-opacity="0.49"/><circle cx="92.7" cy="151.8" r="0.53" fill-opacity="0.36"/><circle cx="144.5" cy="157.8" r="0.43" fill-opacity="0.25"/><circle cx="114.2" cy="153.0" r="0.55" fill-opacity="0.44"/><circle cx="107.4" cy="155.2" r="0.46" fill-opacity="0.25"/><circle cx="106.9" cy="154.2" r="0.43" fill-opacity="0.51"/><circle cx="89.0" cy="151.8" r="0.54" fill-opacity="0.43"/><circle cx="99.4" cy="151.3" r="0.49" fill-opacity="0.50"/><circle cx="85.3" cy="151.0" r="0.57" fill-opacity="0.47"/><circle cx="74.4" cy="153.3" r="0.33" fill-opacity="0.26"/><circle cx="76.7" cy="153.4" r="0.47" fill-opacity="0.30"/><circle cx="99.8" cy="151.8" r="0.55" fill-opacity="0.23"/><circle cx="119.6" cy="159.8" r="0.43" fill-opacity="0.30"/><circle cx="132.6" cy="160.7" r="0.46" fill-opacity="0.43"/><circle cx="100.9" cy="152.7" r="0.32" fill-opacity="0.23"/><circle cx="117.0" cy="156.5" r="0.32" fill-opacity="0.29"/><circle cx="121.9" cy="160.8" r="0.52" fill-opacity="0.48"/><circle cx="91.8" cy="151.1" r="0.34" fill-opacity="0.48"/><circle cx="117.8" cy="156.2" r="0.57" fill-opacity="0.38"/><circle cx="131.6" cy="159.3" r="0.57" fill-opacity="0.26"/><circle cx="98.9" cy="153.8" r="0.42" fill-opacity="0.36"/><circle cx="137.7" cy="158.6" r="0.47" fill-opacity="0.43"/><circle cx="121.2" cy="159.1" r="0.46" fill-opacity="0.52"/><circle cx="77.5" cy="153.1" r="0.49" fill-opacity="0.17"/><circle cx="89.3" cy="150.8" r="0.46" fill-opacity="0.49"/><circle cx="103.5" cy="152.7" r="0.46" fill-opacity="0.49"/><circle cx="104.3" cy="152.5" r="0.56" fill-opacity="0.52"/><circle cx="114.3" cy="155.0" r="0.34" fill-opacity="0.50"/><circle cx="82.5" cy="151.8" r="0.39" fill-opacity="0.47"/><circle cx="129.1" cy="159.7" r="0.57" fill-opacity="0.20"/><circle cx="78.2" cy="152.7" r="0.37" fill-opacity="0.35"/><circle cx="118.1" cy="157.7" r="0.53" fill-opacity="0.32"/><circle cx="115.5" cy="157.3" r="0.38" fill-opacity="0.55"/><circle cx="115.5" cy="156.7" r="0.58" fill-opacity="0.52"/><circle cx="101.6" cy="153.3" r="0.38" fill-opacity="0.60"/><circle cx="121.5" cy="158.4" r="0.54" fill-opacity="0.49"/><circle cx="118.5" cy="158.2" r="0.40" fill-opacity="0.30"/><circle cx="89.8" cy="151.1" r="0.55" fill-opacity="0.54"/><circle cx="133.1" cy="160.0" r="0.51" fill-opacity="0.20"/><circle cx="111.1" cy="153.3" r="0.39" fill-opacity="0.52"/><circle cx="104.0" cy="152.7" r="0.55" fill-opacity="0.28"/><circle cx="114.6" cy="157.0" r="0.39" fill-opacity="0.23"/><circle cx="94.0" cy="150.8" r="0.41" fill-opacity="0.47"/><circle cx="109.3" cy="154.7" r="0.41" fill-opacity="0.48"/><circle cx="109.5" cy="154.6" r="0.54" fill-opacity="0.28"/><circle cx="119.5" cy="157.5" r="0.40" fill-opacity="0.36"/><circle cx="122.1" cy="159.2" r="0.52" fill-opacity="0.33"/><circle cx="126.5" cy="160.6" r="0.33" fill-opacity="0.47"/><circle cx="125.0" cy="160.4" r="0.55" fill-opacity="0.44"/><circle cx="76.9" cy="153.1" r="0.32" fill-opacity="0.39"/><circle cx="106.1" cy="154.8" r="0.53" fill-opacity="0.53"/><circle cx="101.4" cy="154.0" r="0.51" fill-opacity="0.59"/><circle cx="119.1" cy="158.3" r="0.40" fill-opacity="0.46"/><circle cx="113.4" cy="155.3" r="0.53" fill-opacity="0.56"/><circle cx="115.5" cy="156.2" r="0.34" fill-opacity="0.49"/><circle cx="119.8" cy="158.7" r="0.51" fill-opacity="0.33"/><circle cx="110.0" cy="156.4" r="0.34" fill-opacity="0.56"/><circle cx="115.2" cy="156.3" r="0.60" fill-opacity="0.53"/><circle cx="119.5" cy="160.2" r="0.39" fill-opacity="0.56"/><circle cx="134.1" cy="160.1" r="0.35" fill-opacity="0.48"/><circle cx="94.6" cy="151.6" r="0.41" fill-opacity="0.44"/><circle cx="131.4" cy="160.0" r="0.42" fill-opacity="0.37"/><circle cx="90.1" cy="151.1" r="0.49" fill-opacity="0.22"/><circle cx="123.7" cy="158.8" r="0.42" fill-opacity="0.45"/><circle cx="128.8" cy="160.1" r="0.55" fill-opacity="0.53"/><circle cx="104.1" cy="154.6" r="0.46" fill-opacity="0.37"/><circle cx="118.3" cy="157.1" r="0.48" fill-opacity="0.23"/><circle cx="111.7" cy="155.2" r="0.37" fill-opacity="0.32"/><circle cx="102.1" cy="152.1" r="0.57" fill-opacity="0.59"/><circle cx="104.8" cy="153.9" r="0.57" fill-opacity="0.24"/><circle cx="130.9" cy="159.7" r="0.59" fill-opacity="0.18"/><circle cx="88.6" cy="152.3" r="0.54" fill-opacity="0.35"/><circle cx="98.3" cy="153.2" r="0.31" fill-opacity="0.56"/><circle cx="94.9" cy="152.4" r="0.36" fill-opacity="0.32"/><circle cx="97.9" cy="152.2" r="0.56" fill-opacity="0.60"/><circle cx="75.7" cy="153.2" r="0.56" fill-opacity="0.31"/><circle cx="76.4" cy="153.7" r="0.51" fill-opacity="0.19"/><circle cx="83.8" cy="151.6" r="0.50" fill-opacity="0.46"/><circle cx="118.0" cy="156.7" r="0.58" fill-opacity="0.47"/><circle cx="90.8" cy="151.9" r="0.46" fill-opacity="0.41"/><circle cx="92.5" cy="151.1" r="0.33" fill-opacity="0.31"/><circle cx="127.6" cy="160.1" r="0.57" fill-opacity="0.58"/><circle cx="128.7" cy="160.4" r="0.45" fill-opacity="0.27"/><circle cx="115.7" cy="155.7" r="0.46" fill-opacity="0.40"/><circle cx="113.3" cy="154.4" r="0.53" fill-opacity="0.27"/><circle cx="119.3" cy="158.4" r="0.54" fill-opacity="0.29"/><circle cx="111.5" cy="153.5" r="0.45" fill-opacity="0.21"/><circle cx="118.8" cy="158.3" r="0.35" fill-opacity="0.21"/></g><g fill="#111111" stroke="none"><circle cx="212.0" cy="244.2" r="0.61" fill-opacity="0.19"/><circle cx="105.6" cy="236.1" r="0.69" fill-opacity="0.36"/><circle cx="195.8" cy="249.4" r="0.74" fill-opacity="0.27"/><circle cx="177.6" cy="250.2" r="0.66" fill-opacity="0.78"/><circle cx="131.4" cy="238.5" r="0.62" fill-opacity="0.35"/><circle cx="176.5" cy="250.3" r="0.72" fill-opacity="0.53"/><circle cx="121.7" cy="237.9" r="0.36" fill-opacity="0.80"/><circle cx="203.3" cy="247.8" r="0.51" fill-opacity="0.37"/><circle cx="71.2" cy="250.6" r="0.69" fill-opacity="0.47"/><circle cx="130.8" cy="237.0" r="0.40" fill-opacity="0.80"/><circle cx="127.1" cy="236.1" r="0.43" fill-opacity="0.40"/><circle cx="157.2" cy="246.4" r="0.62" fill-opacity="0.85"/><circle cx="148.9" cy="242.6" r="0.57" fill-opacity="0.85"/><circle cx="193.8" cy="249.6" r="0.42" fill-opacity="0.50"/><circle cx="117.8" cy="236.3" r="0.55" fill-opacity="0.64"/><circle cx="115.8" cy="233.0" r="0.52" fill-opacity="0.94"/><circle cx="153.6" cy="243.7" r="0.74" fill-opacity="0.57"/><circle cx="181.2" cy="251.3" r="0.70" fill-opacity="0.57"/><circle cx="150.7" cy="242.9" r="0.64" fill-opacity="0.79"/><circle cx="157.8" cy="244.2" r="0.77" fill-opacity="0.64"/><circle cx="185.4" cy="250.1" r="0.54" fill-opacity="0.49"/><circle cx="182.8" cy="250.3" r="0.55" fill-opacity="0.52"/><circle cx="169.9" cy="248.8" r="0.41" fill-opacity="0.54"/><circle cx="99.4" cy="236.9" r="0.56" fill-opacity="0.41"/><circle cx="166.9" cy="248.2" r="0.53" fill-opacity="0.52"/><circle cx="142.7" cy="240.2" r="0.52" fill-opacity="0.37"/><circle cx="167.4" cy="247.6" r="0.78" fill-opacity="0.84"/><circle cx="144.4" cy="242.3" r="0.52" fill-opacity="0.44"/><circle cx="165.6" cy="248.7" r="0.51" fill-opacity="0.89"/><circle cx="71.1" cy="250.8" r="0.63" fill-opacity="0.22"/><circle cx="134.8" cy="237.5" r="0.52" fill-opacity="0.93"/><circle cx="153.6" cy="247.4" r="0.79" fill-opacity="0.65"/><circle cx="115.1" cy="234.2" r="0.48" fill-opacity="0.82"/><circle cx="200.1" cy="248.2" r="0.47" fill-opacity="0.50"/><circle cx="112.9" cy="234.5" r="0.56" fill-opacity="0.74"/><circle cx="165.7" cy="249.1" r="0.69" fill-opacity="0.53"/><circle cx="157.3" cy="244.1" r="0.51" fill-opacity="0.80"/><circle cx="164.0" cy="247.2" r="0.56" fill-opacity="0.90"/><circle cx="145.7" cy="240.0" r="0.76" fill-opacity="0.58"/><circle cx="138.0" cy="238.1" r="0.48" fill-opacity="0.85"/><circle cx="152.1" cy="242.8" r="0.61" fill-opacity="0.84"/><circle cx="175.0" cy="250.1" r="0.79" fill-opacity="0.85"/><circle cx="181.2" cy="250.6" r="0.78" fill-opacity="0.59"/><circle cx="166.3" cy="249.2" r="0.63" fill-opacity="0.38"/><circle cx="81.8" cy="244.9" r="0.41" fill-opacity="0.33"/><circle cx="121.4" cy="233.5" r="0.77" fill-opacity="0.57"/><circle cx="155.0" cy="243.6" r="0.60" fill-opacity="0.50"/><circle cx="133.1" cy="237.3" r="0.67" fill-opacity="0.74"/><circle cx="85.3" cy="243.1" r="0.57" fill-opacity="0.30"/><circle cx="195.9" cy="249.8" r="0.37" fill-opacity="0.25"/><circle cx="106.7" cy="234.8" r="0.41" fill-opacity="0.61"/><circle cx="130.0" cy="235.4" r="0.63" fill-opacity="0.56"/><circle cx="138.2" cy="237.6" r="0.55" fill-opacity="0.86"/><circle cx="156.1" cy="242.9" r="0.68" fill-opacity="0.59"/><circle cx="86.1" cy="242.8" r="0.57" fill-opacity="0.45"/><circle cx="145.4" cy="241.9" r="0.42" fill-opacity="0.45"/><circle cx="135.1" cy="238.8" r="0.47" fill-opacity="0.45"/><circle cx="115.7" cy="235.3" r="0.36" fill-opacity="0.90"/><circle cx="133.9" cy="237.4" r="0.78" fill-opacity="0.42"/><circle cx="176.0" cy="249.4" r="0.68" fill-opacity="0.39"/><circle cx="102.6" cy="236.3" r="0.79" fill-opacity="0.43"/><circle cx="120.3" cy="235.8" r="0.68" fill-opacity="0.78"/><circle cx="98.0" cy="238.0" r="0.54" fill-opacity="0.62"/><circle cx="71.8" cy="250.5" r="0.53" fill-opacity="0.20"/><circle cx="159.1" cy="245.6" r="0.38" fill-opacity="0.89"/><circle cx="152.8" cy="244.2" r="0.46" fill-opacity="0.38"/><circle cx="139.6" cy="238.7" r="0.37" fill-opacity="0.37"/><circle cx="155.3" cy="245.1" r="0.39" fill-opacity="0.54"/><circle cx="153.0" cy="242.0" r="0.76" fill-opacity="0.53"/><circle cx="148.2" cy="240.3" r="0.40" fill-opacity="0.54"/><circle cx="92.2" cy="239.7" r="0.61" fill-opacity="0.30"/><circle cx="115.1" cy="235.2" r="0.54" fill-opacity="0.54"/><circle cx="147.9" cy="243.8" r="0.67" fill-opacity="0.51"/><circle cx="92.1" cy="239.3" r="0.47" fill-opacity="0.46"/><circle cx="115.5" cy="234.6" r="0.37" fill-opacity="0.43"/><circle cx="131.9" cy="237.3" r="0.63" fill-opacity="0.49"/><circle cx="145.7" cy="243.1" r="0.72" fill-opacity="0.79"/><circle cx="148.6" cy="241.9" r="0.40" fill-opacity="0.54"/><circle cx="147.0" cy="243.0" r="0.79" fill-opacity="0.71"/><circle cx="144.9" cy="240.1" r="0.36" fill-opacity="0.70"/><circle cx="152.3" cy="243.5" r="0.44" fill-opacity="0.69"/><circle cx="129.9" cy="238.1" r="0.51" fill-opacity="0.50"/><circle cx="141.2" cy="239.4" r="0.43" fill-opacity="0.41"/><circle cx="123.5" cy="235.7" r="0.63" fill-opacity="0.83"/><circle cx="135.3" cy="237.7" r="0.53" fill-opacity="0.54"/><circle cx="137.2" cy="238.4" r="0.53" fill-opacity="0.94"/><circle cx="157.8" cy="244.0" r="0.58" fill-opacity="0.52"/><circle cx="82.2" cy="244.3" r="0.61" fill-opacity="0.44"/><circle cx="183.5" cy="250.5" r="0.38" fill-opacity="0.58"/><circle cx="167.4" cy="249.5" r="0.75" fill-opacity="0.49"/><circle cx="139.0" cy="240.3" r="0.75" fill-opacity="0.90"/><circle cx="166.7" cy="249.2" r="0.66" fill-opacity="0.68"/><circle cx="119.3" cy="235.6" r="0.63" fill-opacity="0.81"/><circle cx="106.0" cy="235.1" r="0.72" fill-opacity="0.74"/><circle cx="146.1" cy="240.7" r="0.62" fill-opacity="0.93"/><circle cx="100.5" cy="236.7" r="0.60" fill-opacity="0.52"/><circle cx="100.8" cy="236.2" r="0.68" fill-opacity="0.28"/><circle cx="153.6" cy="241.8" r="0.49" fill-opacity="0.86"/><circle cx="96.1" cy="237.8" r="0.69" fill-opacity="0.51"/><circle cx="221.6" cy="239.1" r="0.38" fill-opacity="0.24"/><circle cx="134.7" cy="238.2" r="0.53" fill-opacity="0.68"/><circle cx="135.4" cy="237.9" r="0.52" fill-opacity="0.76"/><circle cx="154.6" cy="245.9" r="0.67" fill-opacity="0.53"/><circle cx="131.0" cy="238.1" r="0.52" fill-opacity="0.52"/><circle cx="154.7" cy="243.0" r="0.50" fill-opacity="0.86"/><circle cx="156.2" cy="244.4" r="0.46" fill-opacity="0.75"/><circle cx="137.0" cy="237.6" r="0.35" fill-opacity="0.81"/><circle cx="131.6" cy="239.3" r="0.56" fill-opacity="0.58"/><circle cx="155.5" cy="246.1" r="0.56" fill-opacity="0.40"/><circle cx="75.8" cy="248.4" r="0.54" fill-opacity="0.46"/><circle cx="135.7" cy="239.0" r="0.70" fill-opacity="0.60"/><circle cx="112.3" cy="234.5" r="0.65" fill-opacity="0.42"/><circle cx="103.1" cy="236.6" r="0.41" fill-opacity="0.37"/><circle cx="146.4" cy="240.7" r="0.52" fill-opacity="0.82"/><circle cx="85.4" cy="242.9" r="0.56" fill-opacity="0.39"/><circle cx="161.6" cy="247.4" r="0.68" fill-opacity="0.43"/><circle cx="151.7" cy="243.5" r="0.58" fill-opacity="0.72"/><circle cx="195.0" cy="249.2" r="0.37" fill-opacity="0.33"/><circle cx="127.5" cy="235.1" r="0.77" fill-opacity="0.57"/><circle cx="158.0" cy="245.8" r="0.78" fill-opacity="0.94"/><circle cx="119.1" cy="235.9" r="0.68" fill-opacity="0.67"/><circle cx="137.3" cy="239.7" r="0.60" fill-opacity="0.85"/><circle cx="153.4" cy="243.4" r="0.39" fill-opacity="0.56"/><circle cx="112.0" cy="234.8" r="0.68" fill-opacity="0.51"/><circle cx="137.3" cy="238.8" r="0.55" fill-opacity="0.89"/><circle cx="99.0" cy="237.6" r="0.68" fill-opacity="0.48"/><circle cx="72.2" cy="250.1" r="0.37" fill-opacity="0.37"/><circle cx="166.9" cy="248.2" r="0.78" fill-opacity="0.42"/><circle cx="85.1" cy="242.7" r="0.67" fill-opacity="0.22"/><circle cx="110.2" cy="233.6" r="0.69" fill-opacity="0.65"/><circle cx="96.3" cy="238.1" r="0.39" fill-opacity="0.36"/><circle cx="168.3" cy="248.4" r="0.41" fill-opacity="0.64"/><circle cx="154.5" cy="242.0" r="0.54" fill-opacity="0.82"/><circle cx="130.8" cy="236.8" r="0.63" fill-opacity="0.73"/><circle cx="221.2" cy="239.8" r="0.63" fill-opacity="0.44"/><circle cx="164.2" cy="247.6" r="0.52" fill-opacity="0.73"/><circle cx="183.7" cy="250.5" r="0.38" fill-opacity="0.54"/><circle cx="141.4" cy="240.7" r="0.49" fill-opacity="0.46"/><circle cx="106.5" cy="235.2" r="0.58" fill-opacity="0.78"/><circle cx="158.0" cy="246.2" r="0.60" fill-opacity="0.93"/><circle cx="145.4" cy="242.2" r="0.64" fill-opacity="0.90"/><circle cx="123.8" cy="235.4" r="0.41" fill-opacity="0.38"/><circle cx="148.3" cy="240.6" r="0.68" fill-opacity="0.50"/><circle cx="151.5" cy="242.8" r="0.41" fill-opacity="0.47"/><circle cx="92.6" cy="238.8" r="0.74" fill-opacity="0.27"/><circle cx="180.2" cy="250.7" r="0.46" fill-opacity="0.43"/><circle cx="126.4" cy="234.1" r="0.76" fill-opacity="0.52"/><circle cx="124.8" cy="236.3" r="0.54" fill-opacity="0.60"/><circle cx="185.1" cy="250.3" r="0.65" fill-opacity="0.41"/><circle cx="127.0" cy="238.5" r="0.67" fill-opacity="0.72"/><circle cx="195.0" cy="249.9" r="0.70" fill-opacity="0.49"/><circle cx="152.0" cy="243.3" r="0.79" fill-opacity="0.86"/><circle cx="173.3" cy="249.6" r="0.35" fill-opacity="0.70"/><circle cx="162.9" cy="247.8" r="0.55" fill-opacity="0.53"/><circle cx="165.2" cy="247.5" r="0.47" fill-opacity="0.85"/><circle cx="94.8" cy="238.2" r="0.69" fill-opacity="0.26"/><circle cx="150.5" cy="240.7" r="0.36" fill-opacity="0.83"/><circle cx="168.5" cy="248.4" r="0.80" fill-opacity="0.47"/><circle cx="118.2" cy="236.1" r="0.75" fill-opacity="0.76"/><circle cx="104.9" cy="236.5" r="0.53" fill-opacity="0.30"/><circle cx="149.9" cy="243.6" r="0.69" fill-opacity="0.87"/><circle cx="143.8" cy="238.9" r="0.75" fill-opacity="0.78"/><circle cx="147.9" cy="241.8" r="0.70" fill-opacity="0.47"/><circle cx="157.4" cy="247.3" r="0.39" fill-opacity="0.71"/><circle cx="131.6" cy="238.3" r="0.54" fill-opacity="0.41"/><circle cx="82.3" cy="244.1" r="0.38" fill-opacity="0.39"/><circle cx="157.9" cy="243.5" r="0.45" fill-opacity="0.53"/><circle cx="198.4" cy="248.9" r="0.45" fill-opacity="0.41"/><circle cx="165.2" cy="246.9" r="0.74" fill-opacity="0.82"/><circle cx="119.3" cy="235.7" r="0.58" fill-opacity="0.40"/><circle cx="171.0" cy="248.3" r="0.42" fill-opacity="0.52"/><circle cx="148.9" cy="242.2" r="0.46" fill-opacity="0.52"/><circle cx="218.9" cy="240.8" r="0.56" fill-opacity="0.21"/><circle cx="206.8" cy="246.5" r="0.48" fill-opacity="0.27"/><circle cx="129.2" cy="235.7" r="0.65" fill-opacity="0.72"/><circle cx="140.8" cy="239.4" r="0.55" fill-opacity="0.88"/><circle cx="119.3" cy="234.6" r="0.55" fill-opacity="0.79"/><circle cx="76.4" cy="248.0" r="0.76" fill-opacity="0.21"/><circle cx="114.3" cy="234.3" r="0.50" fill-opacity="0.77"/><circle cx="155.8" cy="244.7" r="0.63" fill-opacity="0.86"/><circle cx="121.5" cy="236.3" r="0.70" fill-opacity="0.92"/><circle cx="113.7" cy="234.2" r="0.77" fill-opacity="0.59"/><circle cx="147.0" cy="241.4" r="0.72" fill-opacity="0.75"/><circle cx="109.0" cy="235.1" r="0.58" fill-opacity="0.82"/><circle cx="125.6" cy="236.6" r="0.57" fill-opacity="0.51"/><circle cx="156.5" cy="245.0" r="0.80" fill-opacity="0.82"/><circle cx="74.3" cy="248.9" r="0.46" fill-opacity="0.20"/><circle cx="110.1" cy="234.7" r="0.38" fill-opacity="0.44"/><circle cx="136.5" cy="239.8" r="0.56" fill-opacity="0.42"/><circle cx="133.6" cy="238.2" r="0.73" fill-opacity="0.80"/><circle cx="164.2" cy="246.9" r="0.73" fill-opacity="0.82"/><circle cx="116.2" cy="236.0" r="0.61" fill-opacity="0.49"/><circle cx="106.7" cy="234.8" r="0.68" fill-opacity="0.41"/><circle cx="215.2" cy="242.7" r="0.67" fill-opacity="0.41"/><circle cx="153.4" cy="243.4" r="0.43" fill-opacity="0.63"/><circle cx="159.1" cy="245.4" r="0.51" fill-opacity="0.64"/><circle cx="156.3" cy="243.4" r="0.64" fill-opacity="0.54"/><circle cx="114.6" cy="234.4" r="0.64" fill-opacity="0.43"/><circle cx="147.7" cy="244.4" r="0.36" fill-opacity="0.65"/><circle cx="116.6" cy="236.1" r="0.42" fill-opacity="0.59"/><circle cx="213.0" cy="243.6" r="0.36" fill-opacity="0.25"/><circle cx="147.6" cy="239.8" r="0.57" fill-opacity="0.44"/><circle cx="152.5" cy="245.0" r="0.37" fill-opacity="0.65"/><circle cx="175.0" cy="249.6" r="0.52" fill-opacity="0.65"/><circle cx="168.0" cy="247.8" r="0.67" fill-opacity="0.49"/><circle cx="166.6" cy="247.0" r="0.69" fill-opacity="0.49"/><circle cx="153.9" cy="243.9" r="0.77" fill-opacity="0.62"/><circle cx="123.7" cy="234.6" r="0.39" fill-opacity="0.82"/><circle cx="199.9" cy="248.8" r="0.69" fill-opacity="0.30"/><circle cx="154.0" cy="242.2" r="0.37" fill-opacity="0.93"/><circle cx="121.4" cy="236.4" r="0.47" fill-opacity="0.53"/><circle cx="124.3" cy="238.2" r="0.35" fill-opacity="0.42"/><circle cx="130.0" cy="236.3" r="0.40" fill-opacity="0.66"/><circle cx="113.1" cy="234.1" r="0.40" fill-opacity="0.61"/><circle cx="219.8" cy="240.7" r="0.47" fill-opacity="0.48"/><circle cx="197.5" cy="248.9" r="0.56" fill-opacity="0.50"/><circle cx="119.0" cy="234.1" r="0.49" fill-opacity="0.92"/><circle cx="152.5" cy="242.9" r="0.46" fill-opacity="0.60"/><circle cx="156.9" cy="243.8" r="0.42" fill-opacity="0.37"/><circle cx="125.9" cy="236.2" r="0.57" fill-opacity="0.48"/><circle cx="81.6" cy="245.1" r="0.67" fill-opacity="0.20"/><circle cx="175.1" cy="249.7" r="0.73" fill-opacity="0.63"/><circle cx="103.3" cy="235.4" r="0.55" fill-opacity="0.70"/><circle cx="194.0" cy="249.7" r="0.74" fill-opacity="0.37"/><circle cx="177.1" cy="250.0" r="0.45" fill-opacity="0.55"/><circle cx="134.3" cy="238.8" r="0.78" fill-opacity="0.71"/><circle cx="168.2" cy="247.8" r="0.45" fill-opacity="0.42"/><circle cx="143.3" cy="240.8" r="0.57" fill-opacity="0.45"/><circle cx="130.8" cy="236.3" r="0.57" fill-opacity="0.76"/><circle cx="151.6" cy="242.0" r="0.71" fill-opacity="0.91"/><circle cx="169.3" cy="248.4" r="0.54" fill-opacity="0.44"/><circle cx="123.8" cy="235.3" r="0.36" fill-opacity="0.75"/><circle cx="131.4" cy="238.9" r="0.45" fill-opacity="0.94"/><circle cx="172.6" cy="248.7" r="0.62" fill-opacity="0.76"/><circle cx="116.1" cy="234.5" r="0.50" fill-opacity="0.94"/><circle cx="174.2" cy="250.1" r="0.65" fill-opacity="0.47"/><circle cx="82.5" cy="244.0" r="0.63" fill-opacity="0.47"/><circle cx="144.6" cy="238.7" r="0.69" fill-opacity="0.70"/><circle cx="157.0" cy="243.8" r="0.40" fill-opacity="0.43"/><circle cx="138.1" cy="238.1" r="0.45" fill-opacity="0.75"/><circle cx="179.3" cy="249.8" r="0.61" fill-opacity="0.73"/><circle cx="146.3" cy="240.0" r="0.45" fill-opacity="0.68"/><circle cx="166.6" cy="247.3" r="0.47" fill-opacity="0.76"/><circle cx="137.1" cy="238.1" r="0.51" fill-opacity="0.76"/><circle cx="174.1" cy="249.3" r="0.69" fill-opacity="0.70"/><circle cx="144.7" cy="242.2" r="0.59" fill-opacity="0.86"/><circle cx="138.7" cy="241.5" r="0.42" fill-opacity="0.46"/><circle cx="109.2" cy="235.4" r="0.44" fill-opacity="0.82"/><circle cx="95.8" cy="238.3" r="0.52" fill-opacity="0.32"/><circle cx="154.0" cy="243.9" r="0.65" fill-opacity="0.54"/><circle cx="163.4" cy="245.8" r="0.60" fill-opacity="0.84"/><circle cx="87.2" cy="242.2" r="0.73" fill-opacity="0.20"/><circle cx="135.7" cy="238.1" r="0.47" fill-opacity="0.57"/><circle cx="138.0" cy="237.6" r="0.47" fill-opacity="0.71"/><circle cx="103.6" cy="235.0" r="0.41" fill-opacity="0.70"/><circle cx="110.9" cy="235.4" r="0.49" fill-opacity="0.94"/><circle cx="132.7" cy="237.4" r="0.54" fill-opacity="0.45"/><circle cx="108.9" cy="234.5" r="0.66" fill-opacity="0.63"/><circle cx="115.8" cy="235.5" r="0.38" fill-opacity="0.66"/><circle cx="151.6" cy="244.0" r="0.59" fill-opacity="0.51"/><circle cx="145.6" cy="240.0" r="0.61" fill-opacity="0.35"/><circle cx="151.6" cy="243.4" r="0.66" fill-opacity="0.76"/><circle cx="154.0" cy="242.9" r="0.65" fill-opacity="0.64"/><circle cx="76.3" cy="247.7" r="0.72" fill-opacity="0.36"/><circle cx="110.1" cy="235.0" r="0.69" fill-opacity="0.46"/><circle cx="111.9" cy="235.0" r="0.53" fill-opacity="0.90"/><circle cx="147.3" cy="242.3" r="0.61" fill-opacity="0.82"/><circle cx="107.2" cy="235.3" r="0.56" fill-opacity="0.53"/><circle cx="113.9" cy="235.1" r="0.38" fill-opacity="0.74"/><circle cx="165.4" cy="248.4" r="0.60" fill-opacity="0.46"/><circle cx="157.9" cy="243.6" r="0.64" fill-opacity="0.55"/><circle cx="159.4" cy="246.8" r="0.53" fill-opacity="0.73"/><circle cx="158.3" cy="245.6" r="0.77" fill-opacity="0.44"/><circle cx="177.4" cy="250.6" r="0.55" fill-opacity="0.41"/><circle cx="180.5" cy="251.5" r="0.64" fill-opacity="0.29"/><circle cx="148.3" cy="241.5" r="0.57" fill-opacity="0.39"/><circle cx="95.8" cy="238.0" r="0.45" fill-opacity="0.51"/><circle cx="145.8" cy="241.9" r="0.56" fill-opacity="0.55"/><circle cx="151.8" cy="244.2" r="0.72" fill-opacity="0.56"/><circle cx="136.1" cy="240.0" r="0.74" fill-opacity="0.73"/><circle cx="163.1" cy="245.4" r="0.79" fill-opacity="0.55"/><circle cx="158.4" cy="245.9" r="0.59" fill-opacity="0.93"/><circle cx="180.4" cy="250.2" r="0.65" fill-opacity="0.44"/><circle cx="118.5" cy="234.5" r="0.44" fill-opacity="0.59"/><circle cx="90.9" cy="240.1" r="0.78" fill-opacity="0.44"/><circle cx="126.0" cy="238.6" r="0.66" fill-opacity="0.80"/><circle cx="126.8" cy="236.8" r="0.48" fill-opacity="0.54"/><circle cx="147.1" cy="241.6" r="0.40" fill-opacity="0.36"/><circle cx="126.9" cy="235.7" r="0.51" fill-opacity="0.59"/><circle cx="185.0" cy="250.2" r="0.70" fill-opacity="0.44"/><circle cx="103.5" cy="236.1" r="0.52" fill-opacity="0.60"/><circle cx="117.8" cy="234.2" r="0.41" fill-opacity="0.92"/><circle cx="108.8" cy="235.6" r="0.61" fill-opacity="0.80"/><circle cx="154.3" cy="246.5" r="0.41" fill-opacity="0.49"/><circle cx="106.1" cy="235.3" r="0.64" fill-opacity="0.78"/><circle cx="169.3" cy="248.7" r="0.63" fill-opacity="0.72"/><circle cx="153.8" cy="244.0" r="0.67" fill-opacity="0.47"/><circle cx="153.1" cy="241.6" r="0.78" fill-opacity="0.49"/><circle cx="140.9" cy="238.7" r="0.51" fill-opacity="0.71"/><circle cx="159.9" cy="245.1" r="0.47" fill-opacity="0.59"/><circle cx="82.4" cy="244.8" r="0.66" fill-opacity="0.47"/><circle cx="170.3" cy="248.1" r="0.79" fill-opacity="0.92"/><circle cx="171.8" cy="249.0" r="0.60" fill-opacity="0.69"/><circle cx="116.4" cy="236.3" r="0.60" fill-opacity="0.56"/><circle cx="150.6" cy="241.9" r="0.43" fill-opacity="0.55"/><circle cx="92.1" cy="240.1" r="0.37" fill-opacity="0.53"/><circle cx="144.0" cy="240.3" r="0.59" fill-opacity="0.35"/><circle cx="118.3" cy="234.9" r="0.43" fill-opacity="0.59"/><circle cx="168.8" cy="248.2" r="0.63" fill-opacity="0.94"/><circle cx="112.5" cy="235.5" r="0.57" fill-opacity="0.37"/><circle cx="132.0" cy="236.7" r="0.66" fill-opacity="0.65"/><circle cx="141.1" cy="241.1" r="0.66" fill-opacity="0.60"/><circle cx="170.9" cy="248.9" r="0.41" fill-opacity="0.63"/><circle cx="96.6" cy="238.1" r="0.44" fill-opacity="0.34"/><circle cx="104.2" cy="235.6" r="0.61" fill-opacity="0.53"/><circle cx="160.3" cy="245.9" r="0.72" fill-opacity="0.87"/><circle cx="124.5" cy="237.5" r="0.57" fill-opacity="0.80"/><circle cx="179.9" cy="250.6" r="0.64" fill-opacity="0.38"/><circle cx="157.8" cy="243.3" r="0.73" fill-opacity="0.66"/><circle cx="163.0" cy="247.4" r="0.71" fill-opacity="0.90"/><circle cx="74.8" cy="248.9" r="0.50" fill-opacity="0.26"/><circle cx="136.5" cy="239.3" r="0.54" fill-opacity="0.46"/><circle cx="137.6" cy="237.4" r="0.73" fill-opacity="0.61"/><circle cx="155.3" cy="242.2" r="0.53" fill-opacity="0.46"/><circle cx="112.4" cy="233.7" r="0.62" fill-opacity="0.64"/><circle cx="124.7" cy="234.2" r="0.36" fill-opacity="0.79"/><circle cx="143.4" cy="241.5" r="0.47" fill-opacity="0.51"/><circle cx="127.0" cy="236.6" r="0.79" fill-opacity="0.41"/><circle cx="115.4" cy="236.3" r="0.61" fill-opacity="0.41"/><circle cx="134.6" cy="236.4" r="0.48" fill-opacity="0.59"/><circle cx="151.2" cy="241.5" r="0.70" fill-opacity="0.53"/><circle cx="185.8" cy="250.7" r="0.75" fill-opacity="0.43"/><circle cx="141.8" cy="237.6" r="0.65" fill-opacity="0.93"/><circle cx="141.9" cy="238.6" r="0.51" fill-opacity="0.38"/><circle cx="105.6" cy="234.3" r="0.38" fill-opacity="0.55"/><circle cx="158.0" cy="245.9" r="0.38" fill-opacity="0.82"/><circle cx="153.9" cy="243.2" r="0.60" fill-opacity="0.67"/><circle cx="180.3" cy="250.6" r="0.44" fill-opacity="0.51"/><circle cx="100.9" cy="236.1" r="0.45" fill-opacity="0.31"/><circle cx="105.5" cy="236.1" r="0.69" fill-opacity="0.73"/><circle cx="158.7" cy="247.4" r="0.73" fill-opacity="0.90"/><circle cx="161.4" cy="247.0" r="0.58" fill-opacity="0.46"/><circle cx="170.0" cy="248.4" r="0.61" fill-opacity="0.47"/><circle cx="102.5" cy="236.2" r="0.61" fill-opacity="0.69"/><circle cx="160.8" cy="245.0" r="0.47" fill-opacity="0.72"/><circle cx="161.2" cy="248.2" r="0.71" fill-opacity="0.88"/><circle cx="143.4" cy="242.5" r="0.71" fill-opacity="0.62"/><circle cx="163.4" cy="246.5" r="0.43" fill-opacity="0.80"/><circle cx="158.8" cy="246.5" r="0.70" fill-opacity="0.60"/><circle cx="94.8" cy="238.1" r="0.51" fill-opacity="0.23"/><circle cx="103.7" cy="236.4" r="0.56" fill-opacity="0.40"/><circle cx="121.3" cy="237.1" r="0.67" fill-opacity="0.55"/><circle cx="160.8" cy="248.8" r="0.77" fill-opacity="0.70"/><circle cx="152.1" cy="243.8" r="0.61" fill-opacity="0.78"/><circle cx="148.5" cy="242.3" r="0.46" fill-opacity="0.47"/><circle cx="186.7" cy="250.8" r="0.56" fill-opacity="0.53"/><circle cx="140.0" cy="239.9" r="0.75" fill-opacity="0.87"/><circle cx="155.1" cy="242.8" r="0.41" fill-opacity="0.55"/><circle cx="161.8" cy="247.8" r="0.49" fill-opacity="0.92"/><circle cx="123.3" cy="233.5" r="0.79" fill-opacity="0.65"/><circle cx="122.1" cy="235.9" r="0.74" fill-opacity="0.69"/><circle cx="144.1" cy="240.8" r="0.41" fill-opacity="0.56"/><circle cx="154.7" cy="244.8" r="0.71" fill-opacity="0.91"/><circle cx="178.9" cy="250.5" r="0.65" fill-opacity="0.56"/><circle cx="158.4" cy="246.0" r="0.63" fill-opacity="0.38"/><circle cx="150.9" cy="243.1" r="0.63" fill-opacity="0.47"/><circle cx="158.2" cy="246.0" r="0.40" fill-opacity="0.36"/><circle cx="163.5" cy="247.7" r="0.40" fill-opacity="0.73"/><circle cx="108.1" cy="234.8" r="0.68" fill-opacity="0.33"/><circle cx="140.4" cy="241.6" r="0.75" fill-opacity="0.48"/><circle cx="147.7" cy="243.4" r="0.53" fill-opacity="0.80"/><circle cx="149.6" cy="241.3" r="0.79" fill-opacity="0.71"/><circle cx="156.0" cy="245.9" r="0.62" fill-opacity="0.45"/><circle cx="128.7" cy="237.8" r="0.53" fill-opacity="0.58"/><circle cx="168.0" cy="247.1" r="0.38" fill-opacity="0.89"/><circle cx="127.8" cy="237.4" r="0.40" fill-opacity="0.39"/><circle cx="173.6" cy="249.0" r="0.44" fill-opacity="0.81"/><circle cx="186.8" cy="250.5" r="0.62" fill-opacity="0.60"/><circle cx="168.6" cy="249.2" r="0.63" fill-opacity="0.68"/><circle cx="155.8" cy="243.3" r="0.66" fill-opacity="0.60"/><circle cx="148.9" cy="241.7" r="0.72" fill-opacity="0.49"/><circle cx="167.0" cy="246.6" r="0.39" fill-opacity="0.46"/><circle cx="166.4" cy="247.8" r="0.78" fill-opacity="0.88"/><circle cx="91.3" cy="240.5" r="0.55" fill-opacity="0.43"/><circle cx="166.5" cy="248.8" r="0.47" fill-opacity="0.40"/><circle cx="118.2" cy="236.4" r="0.61" fill-opacity="0.93"/><circle cx="162.3" cy="246.3" r="0.70" fill-opacity="0.83"/><circle cx="168.2" cy="248.5" r="0.47" fill-opacity="0.73"/><circle cx="157.1" cy="244.7" r="0.37" fill-opacity="0.46"/><circle cx="88.6" cy="240.8" r="0.79" fill-opacity="0.33"/><circle cx="156.3" cy="245.4" r="0.70" fill-opacity="0.87"/><circle cx="161.8" cy="249.2" r="0.79" fill-opacity="0.92"/><circle cx="181.3" cy="250.5" r="0.48" fill-opacity="0.58"/><circle cx="163.5" cy="246.8" r="0.40" fill-opacity="0.37"/><circle cx="145.5" cy="240.9" r="0.44" fill-opacity="0.50"/><circle cx="168.6" cy="248.7" r="0.72" fill-opacity="0.91"/><circle cx="167.5" cy="247.7" r="0.46" fill-opacity="0.55"/><circle cx="105.6" cy="237.4" r="0.44" fill-opacity="0.53"/><circle cx="152.8" cy="241.5" r="0.53" fill-opacity="0.78"/><circle cx="135.8" cy="237.5" r="0.69" fill-opacity="0.87"/><circle cx="156.3" cy="242.5" r="0.46" fill-opacity="0.87"/><circle cx="163.6" cy="245.4" r="0.36" fill-opacity="0.88"/><circle cx="139.9" cy="241.2" r="0.52" fill-opacity="0.73"/><circle cx="158.8" cy="244.2" r="0.44" fill-opacity="0.76"/><circle cx="111.5" cy="235.9" r="0.65" fill-opacity="0.73"/><circle cx="123.0" cy="234.5" r="0.49" fill-opacity="0.66"/><circle cx="151.5" cy="245.0" r="0.51" fill-opacity="0.42"/><circle cx="134.0" cy="238.2" r="0.54" fill-opacity="0.42"/><circle cx="169.4" cy="249.4" r="0.59" fill-opacity="0.37"/><circle cx="92.7" cy="239.1" r="0.43" fill-opacity="0.25"/><circle cx="153.2" cy="245.2" r="0.54" fill-opacity="0.36"/><circle cx="71.4" cy="250.6" r="0.36" fill-opacity="0.32"/><circle cx="156.0" cy="247.8" r="0.69" fill-opacity="0.67"/><circle cx="106.3" cy="234.6" r="0.40" fill-opacity="0.51"/><circle cx="166.2" cy="247.6" r="0.75" fill-opacity="0.88"/><circle cx="163.0" cy="248.1" r="0.59" fill-opacity="0.51"/><circle cx="192.0" cy="249.4" r="0.64" fill-opacity="0.29"/><circle cx="155.2" cy="245.3" r="0.48" fill-opacity="0.45"/><circle cx="225.1" cy="237.3" r="0.60" fill-opacity="0.33"/><circle cx="181.2" cy="250.9" r="0.40" fill-opacity="0.48"/><circle cx="91.0" cy="240.6" r="0.67" fill-opacity="0.21"/><circle cx="147.6" cy="242.3" r="0.53" fill-opacity="0.36"/><circle cx="158.0" cy="246.6" r="0.53" fill-opacity="0.75"/><circle cx="217.6" cy="241.5" r="0.65" fill-opacity="0.22"/><circle cx="126.9" cy="235.7" r="0.80" fill-opacity="0.91"/><circle cx="147.7" cy="240.4" r="0.40" fill-opacity="0.74"/><circle cx="150.8" cy="247.9" r="0.43" fill-opacity="0.88"/><circle cx="127.3" cy="239.1" r="0.40" fill-opacity="0.42"/><circle cx="158.8" cy="244.9" r="0.75" fill-opacity="0.42"/><circle cx="155.0" cy="244.9" r="0.47" fill-opacity="0.74"/><circle cx="192.8" cy="249.7" r="0.72" fill-opacity="0.37"/><circle cx="104.8" cy="235.4" r="0.66" fill-opacity="0.60"/><circle cx="129.9" cy="238.4" r="0.68" fill-opacity="0.73"/><circle cx="74.0" cy="249.4" r="0.70" fill-opacity="0.38"/><circle cx="145.0" cy="242.1" r="0.36" fill-opacity="0.69"/><circle cx="157.8" cy="246.2" r="0.56" fill-opacity="0.77"/><circle cx="178.0" cy="250.1" r="0.52" fill-opacity="0.54"/><circle cx="112.3" cy="234.3" r="0.54" fill-opacity="0.81"/><circle cx="154.9" cy="244.1" r="0.51" fill-opacity="0.72"/><circle cx="145.6" cy="238.6" r="0.74" fill-opacity="0.92"/><circle cx="142.5" cy="239.8" r="0.73" fill-opacity="0.36"/><circle cx="154.2" cy="242.5" r="0.63" fill-opacity="0.58"/><circle cx="151.1" cy="244.9" r="0.63" fill-opacity="0.37"/><circle cx="165.5" cy="247.7" r="0.45" fill-opacity="0.95"/><circle cx="159.5" cy="243.9" r="0.55" fill-opacity="0.54"/></g><path d="M199.5 183.5H198V195H210V183.5H208.5M204 183V191.5M200.8 188.5L204 191.6L207.2 188.5" stroke-width="1.1"/><rect x="217" y="182.5" width="8.5" height="9" rx="1" stroke-width="1.1"/><rect x="220.5" y="186" width="9" height="9.5" rx="1" fill="#4a4a4a" stroke-width="1.1"/><path d="M225 188V193.5M222.3 190.8H227.7" stroke-width="1.1"/><path d="M238.5 185.5H249.5M241.5 185.5V183.5H246.5V185.5M239.8 185.5L240.6 195H247.4L248.2 185.5M242.5 187.5V193M244 187.5V193M245.5 187.5V193" stroke-width="1.1"/><path d="M244.5 119L247 116.5L249.5 119" stroke="#bbb" stroke-width="1.1"/><path d="M244.5 169L247 171.5L249.5 169" stroke="#bbb" stroke-width="1.1"/><path d="M238.5 248.5V246C238.5 244 239.6 243 241 243C242.4 243 243.3 244 243.3 245.2" stroke-width="1.2"/><rect x="239.5" y="248.5" width="7.5" height="6.5" rx="0.8" fill="#c8c8c8" stroke="none"/></svg>
</body></html>
